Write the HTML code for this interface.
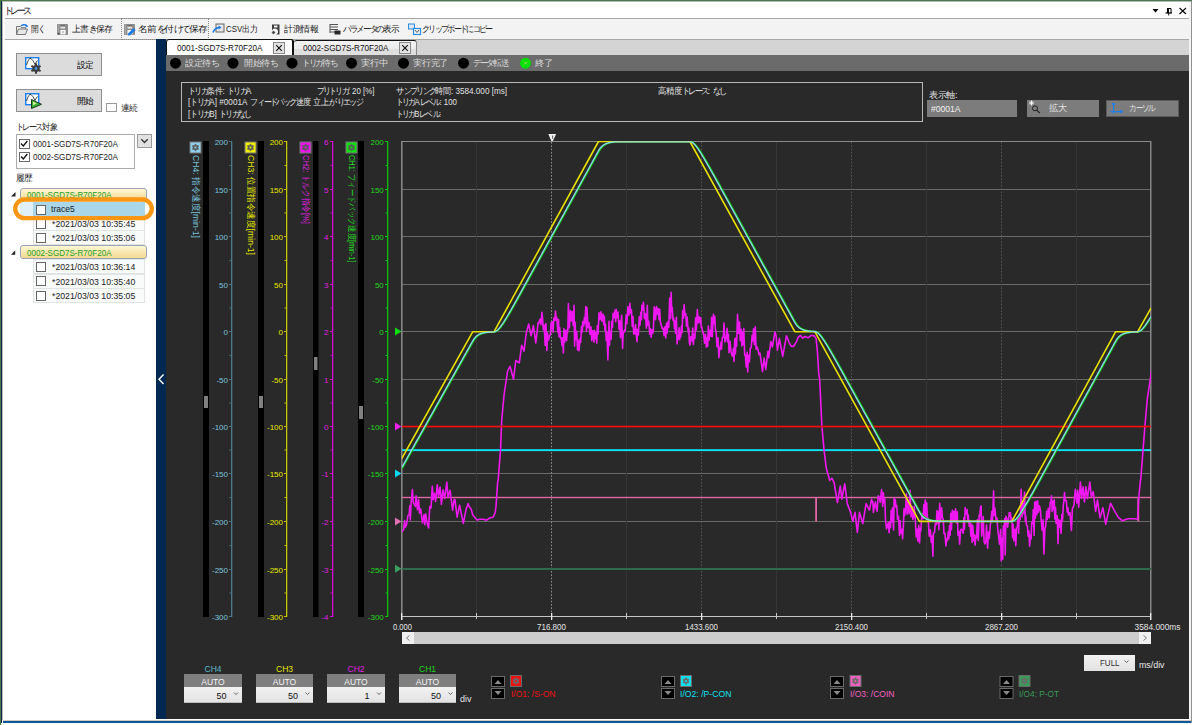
<!DOCTYPE html><html><head><meta charset="utf-8"><title>trace</title><style>
html,body{margin:0;padding:0;width:1192px;height:725px;overflow:hidden;background:#fff;}
body{position:relative;font-family:"Liberation Sans",sans-serif;font-size:9px;color:#000;}
.a{position:absolute;}
.t{position:absolute;white-space:nowrap;line-height:1;}
svg{position:absolute;left:0;top:0;}
.j{display:inline-block;text-align:center;overflow:visible;}
</style></head><body>
<div class="a" style="left:0px;top:0px;width:1192px;height:1px;background:#4a7a4a"></div>
<div class="a" style="left:0px;top:1px;width:1192px;height:1px;background:#b8b8b8"></div>
<div class="a" style="left:0px;top:0px;width:1px;height:725px;background:#4a7a4a"></div>
<div class="a" style="left:1px;top:1px;width:1px;height:722px;background:#0a2550"></div>
<div class="a" style="left:2px;top:2px;width:1px;height:718px;background:#c0bab4"></div>
<div class="a" style="left:1191px;top:1px;width:1px;height:722px;background:#909090"></div>
<div class="a" style="left:1189px;top:2px;width:2px;height:718px;background:#f4f4f4"></div>
<div class="a" style="left:3px;top:720px;width:1188px;height:1px;background:#d0c8c0"></div>
<div class="a" style="left:3px;top:721px;width:1188px;height:2px;background:#0a5aa0"></div>
<div class="t" style="left:4px;top:5.8px;font-size:9.5px;color:#111;transform:scaleX(0.893);transform-origin:0 0"><span class="j" style="width:7.0px">ト</span><span class="j" style="width:7.0px">レ</span><span class="j" style="width:7.0px">ー</span><span class="j" style="width:7.0px">ス</span></div>
<svg width="1192" height="725" style="pointer-events:none"><path d="M1152.5 9 L1158.5 9 L1155.5 12.5 Z" fill="#000"/><path d="M1167.5 8.5 h3.5 v4.5 M1167.5 8.5 v4.5" fill="none" stroke="#000" stroke-width="1"/><rect x="1167" y="8" width="2" height="5" fill="#000"/><path d="M1165.5 13 h6.5" stroke="#000" stroke-width="1.2"/><path d="M1168.7 13 v2.5" stroke="#000" stroke-width="0.9"/><path d="M1179.5 8 L1186 14 M1186 8 L1179.5 14" stroke="#000" stroke-width="1.1"/></svg>
<div class="a" style="left:5px;top:18px;width:1184px;height:1px;background:#a8a8a8"></div>
<div class="a" style="left:5px;top:19px;width:1184px;height:20px;background:#f3f3f3"></div>
<div class="a" style="left:5px;top:39px;width:1184px;height:1px;background:#a8a8a8"></div>
<div class="t" style="left:31px;top:24.5px;font-size:9px;color:#1a1a1a;transform:scaleX(0.865);transform-origin:0 0"><span class="j" style="width:8.6px">開</span><span class="j" style="width:7.0px">く</span></div>
<div class="t" style="left:72px;top:24.5px;font-size:9px;color:#1a1a1a;transform:scaleX(0.978);transform-origin:0 0"><span class="j" style="width:8.6px">上</span><span class="j" style="width:8.6px">書</span><span class="j" style="width:7.0px">き</span><span class="j" style="width:8.6px">保</span><span class="j" style="width:8.6px">存</span></div>
<div class="t" style="left:138px;top:24.5px;font-size:9px;color:#1a1a1a;transform:scaleX(1.086);transform-origin:0 0"><span class="j" style="width:8.6px">名</span><span class="j" style="width:8.6px">前</span><span class="j" style="width:7.0px">を</span><span class="j" style="width:8.6px">付</span><span class="j" style="width:7.0px">け</span><span class="j" style="width:7.0px">て</span><span class="j" style="width:8.6px">保</span><span class="j" style="width:8.6px">存</span></div>
<div class="t" style="left:225.5px;top:24.5px;font-size:9px;color:#1a1a1a;transform:scaleX(0.882);transform-origin:0 0">CSV<span class="j" style="width:8.6px">出</span><span class="j" style="width:8.6px">力</span></div>
<div class="t" style="left:284px;top:24.5px;font-size:9px;color:#1a1a1a;transform:scaleX(1.003);transform-origin:0 0"><span class="j" style="width:8.6px">計</span><span class="j" style="width:8.6px">測</span><span class="j" style="width:8.6px">情</span><span class="j" style="width:8.6px">報</span></div>
<div class="t" style="left:343px;top:24.5px;font-size:9px;color:#1a1a1a;transform:scaleX(0.954);transform-origin:0 0"><span class="j" style="width:7.0px">パ</span><span class="j" style="width:7.0px">ラ</span><span class="j" style="width:7.0px">メ</span><span class="j" style="width:7.0px">ー</span><span class="j" style="width:7.0px">タ</span><span class="j" style="width:7.0px">の</span><span class="j" style="width:8.6px">表</span><span class="j" style="width:8.6px">示</span></div>
<div class="t" style="left:422px;top:24.5px;font-size:9px;color:#1a1a1a;transform:scaleX(0.903);transform-origin:0 0"><span class="j" style="width:7.0px">ク</span><span class="j" style="width:7.0px">リ</span><span class="j" style="width:7.0px">ッ</span><span class="j" style="width:7.0px">プ</span><span class="j" style="width:7.0px">ボ</span><span class="j" style="width:7.0px">ー</span><span class="j" style="width:7.0px">ド</span><span class="j" style="width:7.0px">に</span><span class="j" style="width:7.0px">コ</span><span class="j" style="width:7.0px">ピ</span><span class="j" style="width:7.0px">ー</span></div>
<div class="a" style="left:121px;top:18px;width:88px;height:22px;border:1px dotted #8a8a8a;box-sizing:border-box"></div>
<svg width="1192" height="725"><path d="M16.5 26.5 h4 l1 1.2 h4 v2" fill="none" stroke="#777" stroke-width="1"/><path d="M16.5 26.5 v8 h9 l2-5.5 h-9 l-2 5.5" fill="#e8e8e8" stroke="#777" stroke-width="1"/><path d="M21 26 q3-2.5 6 0" fill="none" stroke="#1a7ae8" stroke-width="1.4"/><path d="M26 24.5 l2.5 1.8 -2.8 1.2z" fill="#1a7ae8"/><rect x="57" y="24" width="11" height="11" rx="0.8" fill="#8c8c8c"/><rect x="57.6" y="24.6" width="1.6" height="9.8" fill="#a6a6a6"/><rect x="60.5" y="25.3" width="4.6" height="3.3" fill="#e4e4e4"/><rect x="60.5" y="25.3" width="4.6" height="1.1" fill="#444"/><rect x="60.4" y="30" width="5.2" height="4.4" fill="#fafafa"/><rect x="62.5" y="31" width="1" height="2.2" fill="#999"/><circle cx="58.6" cy="33.6" r="0.8" fill="#333"/><rect x="124" y="24" width="11" height="11" rx="0.8" fill="#8c8c8c"/><rect x="124.6" y="24.6" width="1.6" height="9.8" fill="#a6a6a6"/><rect x="127.5" y="25.3" width="4.6" height="3.3" fill="#e4e4e4"/><rect x="127.5" y="25.3" width="4.6" height="1.1" fill="#444"/><rect x="127.4" y="30" width="5.2" height="4.4" fill="#fafafa"/><path d="M128.3 33.2 l5.3-5.3 2 2 -5.3 5.3 -2.4 0.4z" fill="#1a7ae8"/><rect x="216" y="24" width="8" height="8" fill="#e8e8e8" stroke="#666" stroke-width="1"/><path d="M213 32.5 q1.5-4.5 6-5" fill="none" stroke="#1a7ae8" stroke-width="1.6"/><path d="M218.5 25.5 l3 2 -3 2z" fill="#1a7ae8"/><path d="M272 24.5 h7.5 v10 h-4 a3 3 0 1 0 -3.5 -3z" fill="#3c3c3c"/><rect x="274" y="25.5" width="3.5" height="2" fill="#f0f0f0"/><circle cx="273.5" cy="32.5" r="1.8" fill="#3c3c3c" stroke="#f0f0f0" stroke-width="0.7"/><path d="M330 24.5 h8 M330 27 h8 M330 29.5 h8 M330 32 h5" stroke="#555" stroke-width="1"/><path d="M330 24 v9" stroke="#555" stroke-width="1"/><rect x="334.5" y="30.5" width="6" height="4" fill="#2a2a2a"/><rect x="408.5" y="24" width="6" height="5" fill="#dde8f4" stroke="#2a8ae0" stroke-width="1"/><rect x="413.5" y="28.5" width="7" height="6" fill="#f0f4f8" stroke="#2a8ae0" stroke-width="1.2"/><path d="M415 30 l2 2.5 2-2.5" fill="none" stroke="#333" stroke-width="0.8"/></svg>
<div class="a" style="left:16px;top:53px;width:86px;height:23px;background:#dcdcdc;border:1px solid #8f8f8f;box-sizing:border-box"></div>
<div class="a" style="left:16px;top:89px;width:86px;height:23px;background:#dcdcdc;border:1px solid #8f8f8f;box-sizing:border-box"></div>
<div class="t" style="left:77px;top:61px;font-size:9px;transform:scaleX(0.959);transform-origin:0 0"><span class="j" style="width:8.6px">設</span><span class="j" style="width:8.6px">定</span></div>
<div class="t" style="left:77px;top:97px;font-size:9px;transform:scaleX(0.959);transform-origin:0 0"><span class="j" style="width:8.6px">開</span><span class="j" style="width:8.6px">始</span></div>
<div class="a" style="left:106px;top:103px;width:11px;height:9px;background:#fff;border:1px solid #9a9a9a;box-sizing:border-box"></div>
<div class="t" style="left:121px;top:104px;font-size:9px;color:#222;transform:scaleX(0.959);transform-origin:0 0"><span class="j" style="width:8.6px">連</span><span class="j" style="width:8.6px">続</span></div>
<div class="t" style="left:16px;top:123px;font-size:9px;color:#222;transform:scaleX(0.918);transform-origin:0 0"><span class="j" style="width:7.0px">ト</span><span class="j" style="width:7.0px">レ</span><span class="j" style="width:7.0px">ー</span><span class="j" style="width:7.0px">ス</span><span class="j" style="width:8.6px">対</span><span class="j" style="width:8.6px">象</span></div>
<div class="a" style="left:16px;top:134px;width:119px;height:35px;background:#fff;border:1px solid #ababab;box-sizing:border-box"></div>
<div class="a" style="left:137px;top:134px;width:15px;height:14px;background:#e1e1e1;border:1px solid #9a9a9a;box-sizing:border-box"></div>
<div class="a" style="left:19px;top:139px;width:11px;height:10px;background:#fff;border:1px solid #6a6a6a;box-sizing:border-box"></div>
<div class="t" style="left:33px;top:139.7px;font-size:9px;color:#222;transform:scaleX(0.899);transform-origin:0 0">0001-SGD7S-R70F20A</div>
<div class="a" style="left:19px;top:152px;width:11px;height:10px;background:#fff;border:1px solid #6a6a6a;box-sizing:border-box"></div>
<div class="t" style="left:33px;top:152.7px;font-size:9px;color:#222;transform:scaleX(0.899);transform-origin:0 0">0002-SGD7S-R70F20A</div>
<div class="t" style="left:16px;top:174px;font-size:9px;color:#222;transform:scaleX(0.959);transform-origin:0 0"><span class="j" style="width:8.6px">履</span><span class="j" style="width:8.6px">歴</span></div>
<svg width="1192" height="725"><rect x="25.7" y="57.7" width="13" height="11" fill="#fff" stroke="#1a7ef0" stroke-width="1.4"/><path d="M26.5 65 q2.5-8 4.5-6.5 q2 1.5 4 6 q1.5-3 2.5-4" fill="none" stroke="#333" stroke-width="0.9"/><circle cx="36" cy="68.5" r="3.6" fill="#3c3c3c"/><path d="M36 63.2 v10.6 M31.4 65.8 l9.2 5.4 M31.4 71.2 l9.2 -5.4" stroke="#3c3c3c" stroke-width="2"/><circle cx="36" cy="68.5" r="1.4" fill="#4a90e0"/><rect x="25.7" y="93.7" width="13" height="11" fill="#fff" stroke="#1a7ef0" stroke-width="1.4"/><path d="M26.5 101 q2.5-8 4.5-6.5 q2 1.5 4 6 q1.5-3 2.5-4" fill="none" stroke="#333" stroke-width="0.9"/><path d="M31.5 99.5 l10 4.8 -10 4.2z" fill="#34b034" stroke="#1a3a1a" stroke-width="1"/><path d="M33 101.5 l4 2 -4 1.8z" fill="#d8f0a0"/><path d="M21 143.5 l2.3 2.5 4-5" fill="none" stroke="#111" stroke-width="1.3"/><path d="M21 156.5 l2.3 2.5 4-5" fill="none" stroke="#111" stroke-width="1.3"/><path d="M141.3 139.3 l3.2 3.2 3.2-3.2" fill="none" stroke="#333" stroke-width="1.4"/></svg>
<div class="a" style="left:33px;top:216px;width:112px;height:15px;background:#f9fafa;border:1px solid #e0e4e4;box-sizing:border-box"></div>
<div class="a" style="left:36px;top:218.5px;width:10px;height:10px;background:#fff;border:1px solid #666;box-sizing:border-box"></div>
<div class="t" style="left:51.5px;top:220px;font-size:9px;color:#222;transform:scaleX(0.967);transform-origin:0 0">*2021/03/03&#160;10:35:45</div>
<div class="a" style="left:33px;top:230px;width:112px;height:15px;background:#f9fafa;border:1px solid #e0e4e4;box-sizing:border-box"></div>
<div class="a" style="left:36px;top:232.5px;width:10px;height:10px;background:#fff;border:1px solid #666;box-sizing:border-box"></div>
<div class="t" style="left:51.5px;top:234px;font-size:9px;color:#222;transform:scaleX(0.967);transform-origin:0 0">*2021/03/03&#160;10:35:06</div>
<div class="a" style="left:33px;top:259px;width:112px;height:15px;background:#f9fafa;border:1px solid #e0e4e4;box-sizing:border-box"></div>
<div class="a" style="left:36px;top:261.5px;width:10px;height:10px;background:#fff;border:1px solid #666;box-sizing:border-box"></div>
<div class="t" style="left:51.5px;top:263px;font-size:9px;color:#222;transform:scaleX(0.967);transform-origin:0 0">*2021/03/03&#160;10:36:14</div>
<div class="a" style="left:33px;top:273.5px;width:112px;height:15px;background:#f9fafa;border:1px solid #e0e4e4;box-sizing:border-box"></div>
<div class="a" style="left:36px;top:276.0px;width:10px;height:10px;background:#fff;border:1px solid #666;box-sizing:border-box"></div>
<div class="t" style="left:51.5px;top:277.5px;font-size:9px;color:#222;transform:scaleX(0.967);transform-origin:0 0">*2021/03/03&#160;10:35:40</div>
<div class="a" style="left:33px;top:288px;width:112px;height:15px;background:#f9fafa;border:1px solid #e0e4e4;box-sizing:border-box"></div>
<div class="a" style="left:36px;top:290.5px;width:10px;height:10px;background:#fff;border:1px solid #666;box-sizing:border-box"></div>
<div class="t" style="left:51.5px;top:292px;font-size:9px;color:#222;transform:scaleX(0.967);transform-origin:0 0">*2021/03/03&#160;10:35:05</div>
<div class="a" style="left:19.5px;top:187.5px;width:127px;height:13px;background:linear-gradient(#fff8d4,#f4d890);border:1px solid #9aa4b8;border-radius:3px;box-sizing:border-box"></div>
<div class="t" style="left:26.5px;top:190.5px;font-size:9px;color:#22a022;transform:scaleX(0.894);transform-origin:0 0">0001-SGD7S-R70F20A</div>
<div class="a" style="left:20px;top:202px;width:13px;height:14px;background:#dff0f8"></div>
<div class="a" style="left:33px;top:202px;width:112px;height:14px;background:#a9d6e8"></div>
<div class="a" style="left:36px;top:204.5px;width:10px;height:10px;background:#fff;border:1px solid #666;box-sizing:border-box"></div>
<div class="t" style="left:50.5px;top:205px;font-size:9px;color:#222;transform:scaleX(0.951);transform-origin:0 0">trace5</div>
<div class="a" style="left:19.5px;top:245.3px;width:127px;height:13.7px;background:linear-gradient(#fff8d4,#f4d890);border:1px solid #9aa4b8;border-radius:3px;box-sizing:border-box"></div>
<div class="t" style="left:26.5px;top:248.65px;font-size:9px;color:#22a022;transform:scaleX(0.894);transform-origin:0 0">0002-SGD7S-R70F20A</div>
<svg width="1192" height="725"><path d="M11 196.5 h4.5 v-4.5z" fill="#222"/><path d="M11 254.8 h4.2 v-4.5z" fill="#222"/><rect x="15.2" y="199.5" width="136.6" height="18.6" rx="9.3" fill="none" stroke="#fb9612" stroke-width="4.3"/></svg>
<div class="a" style="left:156px;top:39px;width:10px;height:680px;background:#002850"></div>
<svg width="1192" height="725"><path d="M163.5 374.5 l-4.5 4.8 4.5 4.8" fill="none" stroke="#fff" stroke-width="1.4"/></svg>
<div class="a" style="left:166px;top:39px;width:1023px;height:17px;background:#d4d4d4"></div>
<div class="a" style="left:166px;top:39px;width:1023px;height:1px;background:#a8a8a8"></div>
<div class="a" style="left:166px;top:39px;width:128px;height:17px;background:#fff;border-top:1px solid #111;border-left:1px solid #111;border-right:2px solid #111;border-radius:3px 3px 0 0;box-sizing:border-box"></div>
<div class="a" style="left:294px;top:40px;width:123px;height:16px;background:linear-gradient(#f2f2f2 0,#ececec 50%,#dedede 51%,#e0e0e0);border-top:1px solid #111;border-right:1px solid #888;border-radius:3px 3px 0 0;box-sizing:border-box"></div>
<div class="t" style="left:176.8px;top:44.3px;font-size:9px;color:#111;transform:scaleX(0.904);transform-origin:0 0">0001-SGD7S-R70F20A</div>
<div class="t" style="left:303px;top:44.3px;font-size:9px;color:#111;transform:scaleX(0.904);transform-origin:0 0">0002-SGD7S-R70F20A</div>
<div class="a" style="left:273px;top:42px;width:12px;height:12px;background:#e4e4e4;border:1px solid #8a8a8a;box-sizing:border-box"></div>
<svg width="1192" height="725"><path d="M276.2 45.2 l5.6 5.6 M281.8 45.2 l-5.6 5.6" stroke="#111" stroke-width="1.15"/></svg>
<div class="a" style="left:399px;top:42px;width:12px;height:12px;background:#e4e4e4;border:1px solid #8a8a8a;box-sizing:border-box"></div>
<svg width="1192" height="725"><path d="M402.2 45.2 l5.6 5.6 M407.8 45.2 l-5.6 5.6" stroke="#111" stroke-width="1.15"/></svg>
<div class="a" style="left:166px;top:55px;width:1023px;height:16px;background:#6b6b6b"></div>
<svg width="1192" height="725"><circle cx="175.5" cy="63.2" r="5.5" fill="#000"/><circle cx="233.0" cy="63.2" r="5.5" fill="#000"/><circle cx="292.0" cy="63.2" r="5.5" fill="#000"/><circle cx="351.5" cy="63.2" r="5.5" fill="#000"/><circle cx="403.5" cy="63.2" r="5.5" fill="#000"/><circle cx="463.5" cy="63.2" r="5.5" fill="#000"/><circle cx="525.5" cy="63.2" r="5.5" fill="#00e000"/><path d="M524 61.5 l3 3 M527 61.5 l-3 3" stroke="#c8d060" stroke-width="0.8"/></svg>
<div class="t" style="left:185px;top:59px;font-size:9px;color:#dcdcdc;transform:scaleX(0.991);transform-origin:0 0"><span class="j" style="width:8.6px">設</span><span class="j" style="width:8.6px">定</span><span class="j" style="width:8.6px">待</span><span class="j" style="width:7.0px">ち</span></div>
<div class="t" style="left:244px;top:59px;font-size:9px;color:#dcdcdc;transform:scaleX(0.991);transform-origin:0 0"><span class="j" style="width:8.6px">開</span><span class="j" style="width:8.6px">始</span><span class="j" style="width:8.6px">待</span><span class="j" style="width:7.0px">ち</span></div>
<div class="t" style="left:301.5px;top:59px;font-size:9px;color:#dcdcdc;transform:scaleX(0.956);transform-origin:0 0"><span class="j" style="width:7.0px">ト</span><span class="j" style="width:7.0px">リ</span><span class="j" style="width:7.0px">ガ</span><span class="j" style="width:8.6px">待</span><span class="j" style="width:7.0px">ち</span></div>
<div class="t" style="left:360.5px;top:59px;font-size:9px;color:#dcdcdc;transform:scaleX(1.047);transform-origin:0 0"><span class="j" style="width:8.6px">実</span><span class="j" style="width:8.6px">行</span><span class="j" style="width:8.6px">中</span></div>
<div class="t" style="left:413px;top:59px;font-size:9px;color:#dcdcdc;transform:scaleX(1.021);transform-origin:0 0"><span class="j" style="width:8.6px">実</span><span class="j" style="width:8.6px">行</span><span class="j" style="width:8.6px">完</span><span class="j" style="width:7.0px">了</span></div>
<div class="t" style="left:473px;top:59px;font-size:9px;color:#dcdcdc;transform:scaleX(0.942);transform-origin:0 0"><span class="j" style="width:7.0px">デ</span><span class="j" style="width:7.0px">ー</span><span class="j" style="width:7.0px">タ</span><span class="j" style="width:8.6px">転</span><span class="j" style="width:8.6px">送</span></div>
<div class="t" style="left:535px;top:59px;font-size:9px;color:#dcdcdc;transform:scaleX(1.026);transform-origin:0 0"><span class="j" style="width:8.6px">終</span><span class="j" style="width:7.0px">了</span></div>
<div class="a" style="left:166px;top:71px;width:1023px;height:648px;background:#292929"></div>
<div class="a" style="left:181px;top:82px;width:742px;height:40px;border:1px solid #b8b8b8;box-sizing:border-box"></div>
<div class="t" style="left:187.5px;top:86.5px;font-size:9px;color:#e2e2e2;transform:scaleX(0.905);transform-origin:0 0"><span class="j" style="width:7.0px">ト</span><span class="j" style="width:7.0px">リ</span><span class="j" style="width:7.0px">ガ</span><span class="j" style="width:8.6px">条</span><span class="j" style="width:8.6px">件</span>:&#160;<span class="j" style="width:7.0px">ト</span><span class="j" style="width:7.0px">リ</span><span class="j" style="width:7.0px">ガ</span>A</div>
<div class="t" style="left:187.5px;top:98px;font-size:9px;color:#e2e2e2;transform:scaleX(0.906);transform-origin:0 0">[<span class="j" style="width:7.0px">ト</span><span class="j" style="width:7.0px">リ</span><span class="j" style="width:7.0px">ガ</span>A]&#160;#0001A&#160;<span class="j" style="width:8.6px">フ</span><span class="j" style="width:7.0px">ィ</span><span class="j" style="width:7.0px">ー</span><span class="j" style="width:7.0px">ド</span><span class="j" style="width:7.0px">バ</span><span class="j" style="width:7.0px">ッ</span><span class="j" style="width:7.0px">ク</span><span class="j" style="width:8.6px">速</span><span class="j" style="width:8.6px">度</span>&#160;<span class="j" style="width:8.6px">立</span><span class="j" style="width:8.6px">上</span><span class="j" style="width:8.6px">が</span><span class="j" style="width:7.0px">り</span><span class="j" style="width:7.0px">エ</span><span class="j" style="width:7.0px">ッ</span><span class="j" style="width:7.0px">ジ</span></div>
<div class="t" style="left:187.5px;top:109.5px;font-size:9px;color:#e2e2e2;transform:scaleX(0.899);transform-origin:0 0">[<span class="j" style="width:7.0px">ト</span><span class="j" style="width:7.0px">リ</span><span class="j" style="width:7.0px">ガ</span>B]&#160;<span class="j" style="width:7.0px">ト</span><span class="j" style="width:7.0px">リ</span><span class="j" style="width:7.0px">ガ</span><span class="j" style="width:7.0px">な</span><span class="j" style="width:7.0px">し</span></div>
<div class="t" style="left:317px;top:86.5px;font-size:9px;color:#e2e2e2;transform:scaleX(0.878);transform-origin:0 0"><span class="j" style="width:7.0px">プ</span><span class="j" style="width:7.0px">リ</span><span class="j" style="width:7.0px">ト</span><span class="j" style="width:7.0px">リ</span><span class="j" style="width:7.0px">ガ</span>:&#160;20&#160;[%]</div>
<div class="t" style="left:396px;top:86.5px;font-size:9px;color:#e2e2e2;transform:scaleX(0.904);transform-origin:0 0"><span class="j" style="width:8.6px">サ</span><span class="j" style="width:7.0px">ン</span><span class="j" style="width:7.0px">プ</span><span class="j" style="width:7.0px">リ</span><span class="j" style="width:7.0px">ン</span><span class="j" style="width:7.0px">グ</span><span class="j" style="width:8.6px">時</span><span class="j" style="width:8.6px">間</span>:&#160;3584.000&#160;[ms]</div>
<div class="t" style="left:396px;top:98px;font-size:9px;color:#e2e2e2;transform:scaleX(0.876);transform-origin:0 0"><span class="j" style="width:7.0px">ト</span><span class="j" style="width:7.0px">リ</span><span class="j" style="width:7.0px">ガ</span>A<span class="j" style="width:7.0px">レ</span><span class="j" style="width:8.6px">ベ</span><span class="j" style="width:7.0px">ル</span>:&#160;100</div>
<div class="t" style="left:396px;top:109.5px;font-size:9px;color:#e2e2e2;transform:scaleX(0.864);transform-origin:0 0"><span class="j" style="width:7.0px">ト</span><span class="j" style="width:7.0px">リ</span><span class="j" style="width:7.0px">ガ</span>B<span class="j" style="width:7.0px">レ</span><span class="j" style="width:8.6px">ベ</span><span class="j" style="width:7.0px">ル</span>:</div>
<div class="t" style="left:658px;top:86.5px;font-size:9px;color:#e2e2e2;transform:scaleX(0.927);transform-origin:0 0"><span class="j" style="width:8.6px">高</span><span class="j" style="width:8.6px">精</span><span class="j" style="width:8.6px">度</span><span class="j" style="width:7.0px">ト</span><span class="j" style="width:7.0px">レ</span><span class="j" style="width:7.0px">ー</span><span class="j" style="width:7.0px">ス</span>:&#160;<span class="j" style="width:7.0px">な</span><span class="j" style="width:7.0px">し</span></div>
<div class="t" style="left:928.5px;top:90.5px;font-size:9px;color:#e2e2e2;transform:scaleX(1.007);transform-origin:0 0"><span class="j" style="width:8.6px">表</span><span class="j" style="width:8.6px">示</span><span class="j" style="width:8.6px">軸</span>:</div>
<div class="a" style="left:927px;top:100px;width:90px;height:17px;background:#7c7c7c"></div>
<div class="t" style="left:931px;top:104.5px;font-size:9px;color:#f0f0f0;transform:scaleX(0.951);transform-origin:0 0">#0001A</div>
<div class="a" style="left:1027px;top:100px;width:72px;height:17px;background:#7c7c7c"></div>
<div class="t" style="left:1049px;top:104px;font-size:9px;color:#e2e2e2;transform:scaleX(1.017);transform-origin:0 0"><span class="j" style="width:8.6px">拡</span><span class="j" style="width:8.6px">大</span></div>
<div class="a" style="left:1106px;top:100px;width:73px;height:17px;background:#7c7c7c;border:1px solid #5a5a5a;box-sizing:border-box"></div>
<div class="t" style="left:1129px;top:104px;font-size:9px;color:#e2e2e2;transform:scaleX(0.861);transform-origin:0 0"><span class="j" style="width:8.6px">カ</span><span class="j" style="width:7.0px">ー</span><span class="j" style="width:7.0px">ソ</span><span class="j" style="width:7.0px">ル</span></div>
<svg width="1192" height="725"><circle cx="1035" cy="108.3" r="2.5" fill="none" stroke="#222" stroke-width="1"/><path d="M1036.8 110.1 l3 3" stroke="#222" stroke-width="1.2"/><path d="M1031.5 100.5 v5 M1029 103 h5 M1030 101.5 l3 3 M1033 101.5 l-3 3" stroke="#fff" stroke-width="0.9"/><path d="M1113.6 104 v9.5 M1110.5 111.6 h10" fill="none" stroke="#1a7ef0" stroke-width="1.2"/><rect x="1112.2" y="103" width="2.8" height="2" fill="#1a7ef0"/><circle cx="1121" cy="111.6" r="1.5" fill="#1a7ef0"/></svg>
<svg width="1192" height="725" font-family="Liberation Sans, sans-serif"><rect x="203" y="141" width="6" height="476" fill="#000"/><rect x="204" y="396" width="4" height="12" fill="#808080"/><rect x="231" y="141" width="1.3" height="476" fill="#4d7888"/><rect x="229" y="141" width="2.5" height="1" fill="#4d7888"/><rect x="229.5" y="165.0" width="2" height="1" fill="#4d7888"/><text x="228" y="144.5" font-size="8px" fill="#7cc4dc" text-anchor="end">200</text><rect x="229" y="189" width="2.5" height="1" fill="#4d7888"/><rect x="229.5" y="212.5" width="2" height="1" fill="#4d7888"/><text x="228" y="192.5" font-size="8px" fill="#7cc4dc" text-anchor="end">150</text><rect x="229" y="236" width="2.5" height="1" fill="#4d7888"/><rect x="229.5" y="260.0" width="2" height="1" fill="#4d7888"/><text x="228" y="239.5" font-size="8px" fill="#7cc4dc" text-anchor="end">100</text><rect x="229" y="284" width="2.5" height="1" fill="#4d7888"/><rect x="229.5" y="307.5" width="2" height="1" fill="#4d7888"/><text x="228" y="287.5" font-size="8px" fill="#7cc4dc" text-anchor="end">50</text><rect x="229" y="331" width="2.5" height="1" fill="#4d7888"/><rect x="229.5" y="355.0" width="2" height="1" fill="#4d7888"/><text x="228" y="334.5" font-size="8px" fill="#7cc4dc" text-anchor="end">0</text><rect x="229" y="379" width="2.5" height="1" fill="#4d7888"/><rect x="229.5" y="402.5" width="2" height="1" fill="#4d7888"/><text x="228" y="382.5" font-size="8px" fill="#7cc4dc" text-anchor="end">-50</text><rect x="229" y="426" width="2.5" height="1" fill="#4d7888"/><rect x="229.5" y="449.5" width="2" height="1" fill="#4d7888"/><text x="228" y="429.5" font-size="8px" fill="#7cc4dc" text-anchor="end">-100</text><rect x="229" y="473" width="2.5" height="1" fill="#4d7888"/><rect x="229.5" y="497.0" width="2" height="1" fill="#4d7888"/><text x="228" y="476.5" font-size="8px" fill="#7cc4dc" text-anchor="end">-150</text><rect x="229" y="521" width="2.5" height="1" fill="#4d7888"/><rect x="229.5" y="545.0" width="2" height="1" fill="#4d7888"/><text x="228" y="524.5" font-size="8px" fill="#7cc4dc" text-anchor="end">-200</text><rect x="229" y="569" width="2.5" height="1" fill="#4d7888"/><rect x="229.5" y="592.5" width="2" height="1" fill="#4d7888"/><text x="228" y="572.5" font-size="8px" fill="#7cc4dc" text-anchor="end">-250</text><rect x="229" y="616" width="2.5" height="1" fill="#4d7888"/><text x="228" y="619.5" font-size="8px" fill="#7cc4dc" text-anchor="end">-300</text><rect x="190" y="142" width="11" height="11" fill="#8fd0ee" stroke="#777" stroke-width="1"/><path d="M195.50 143.90 L196.70 145.42 L198.62 145.70 L197.90 147.50 L198.62 149.30 L196.70 149.58 L195.50 151.10 L194.30 149.58 L192.38 149.30 L193.10 147.50 L192.38 145.70 L194.30 145.42Z" fill="#5a5a5a" stroke="#5a5a5a" stroke-width="0.6" stroke-linejoin="round"/><circle cx="195.5" cy="147.5" r="1.08" fill="#8fd0ee"/><text transform="translate(192.5,155) rotate(90)" font-size="9px" fill="#7cc4dc" textLength="83" lengthAdjust="spacingAndGlyphs">CH4: 指令速度[min-1]</text><rect x="258" y="141" width="6" height="476" fill="#000"/><rect x="259" y="396" width="4" height="12" fill="#808080"/><rect x="286" y="141" width="1.3" height="476" fill="#c4c400"/><rect x="284" y="141" width="2.5" height="1" fill="#c4c400"/><rect x="284.5" y="165.0" width="2" height="1" fill="#c4c400"/><text x="283" y="144.5" font-size="8px" fill="#e8e800" text-anchor="end">200</text><rect x="284" y="189" width="2.5" height="1" fill="#c4c400"/><rect x="284.5" y="212.5" width="2" height="1" fill="#c4c400"/><text x="283" y="192.5" font-size="8px" fill="#e8e800" text-anchor="end">150</text><rect x="284" y="236" width="2.5" height="1" fill="#c4c400"/><rect x="284.5" y="260.0" width="2" height="1" fill="#c4c400"/><text x="283" y="239.5" font-size="8px" fill="#e8e800" text-anchor="end">100</text><rect x="284" y="284" width="2.5" height="1" fill="#c4c400"/><rect x="284.5" y="307.5" width="2" height="1" fill="#c4c400"/><text x="283" y="287.5" font-size="8px" fill="#e8e800" text-anchor="end">50</text><rect x="284" y="331" width="2.5" height="1" fill="#c4c400"/><rect x="284.5" y="355.0" width="2" height="1" fill="#c4c400"/><text x="283" y="334.5" font-size="8px" fill="#e8e800" text-anchor="end">0</text><rect x="284" y="379" width="2.5" height="1" fill="#c4c400"/><rect x="284.5" y="402.5" width="2" height="1" fill="#c4c400"/><text x="283" y="382.5" font-size="8px" fill="#e8e800" text-anchor="end">-50</text><rect x="284" y="426" width="2.5" height="1" fill="#c4c400"/><rect x="284.5" y="449.5" width="2" height="1" fill="#c4c400"/><text x="283" y="429.5" font-size="8px" fill="#e8e800" text-anchor="end">-100</text><rect x="284" y="473" width="2.5" height="1" fill="#c4c400"/><rect x="284.5" y="497.0" width="2" height="1" fill="#c4c400"/><text x="283" y="476.5" font-size="8px" fill="#e8e800" text-anchor="end">-150</text><rect x="284" y="521" width="2.5" height="1" fill="#c4c400"/><rect x="284.5" y="545.0" width="2" height="1" fill="#c4c400"/><text x="283" y="524.5" font-size="8px" fill="#e8e800" text-anchor="end">-200</text><rect x="284" y="569" width="2.5" height="1" fill="#c4c400"/><rect x="284.5" y="592.5" width="2" height="1" fill="#c4c400"/><text x="283" y="572.5" font-size="8px" fill="#e8e800" text-anchor="end">-250</text><rect x="284" y="616" width="2.5" height="1" fill="#c4c400"/><text x="283" y="619.5" font-size="8px" fill="#e8e800" text-anchor="end">-300</text><rect x="245" y="142" width="11" height="11" fill="#f0f000" stroke="#777" stroke-width="1"/><path d="M250.50 143.90 L251.70 145.42 L253.62 145.70 L252.90 147.50 L253.62 149.30 L251.70 149.58 L250.50 151.10 L249.30 149.58 L247.38 149.30 L248.10 147.50 L247.38 145.70 L249.30 145.42Z" fill="#5a5a5a" stroke="#5a5a5a" stroke-width="0.6" stroke-linejoin="round"/><circle cx="250.5" cy="147.5" r="1.08" fill="#f0f000"/><text transform="translate(247.5,155) rotate(90)" font-size="9px" fill="#e8e800" textLength="100" lengthAdjust="spacingAndGlyphs">CH3: 位置指令速度[min-1]</text><rect x="313" y="141" width="5.5" height="476" fill="#000"/><rect x="314" y="357" width="3.5" height="13" fill="#808080"/><rect x="332" y="141" width="1.3" height="476" fill="#d010d0"/><rect x="330" y="141" width="2.5" height="1" fill="#d010d0"/><rect x="330.5" y="165.0" width="2" height="1" fill="#d010d0"/><text x="328.5" y="144.5" font-size="8px" fill="#e020e0" text-anchor="end">6</text><rect x="330" y="189" width="2.5" height="1" fill="#d010d0"/><rect x="330.5" y="212.5" width="2" height="1" fill="#d010d0"/><text x="328.5" y="192.5" font-size="8px" fill="#e020e0" text-anchor="end">5</text><rect x="330" y="236" width="2.5" height="1" fill="#d010d0"/><rect x="330.5" y="260.0" width="2" height="1" fill="#d010d0"/><text x="328.5" y="239.5" font-size="8px" fill="#e020e0" text-anchor="end">4</text><rect x="330" y="284" width="2.5" height="1" fill="#d010d0"/><rect x="330.5" y="307.5" width="2" height="1" fill="#d010d0"/><text x="328.5" y="287.5" font-size="8px" fill="#e020e0" text-anchor="end">3</text><rect x="330" y="331" width="2.5" height="1" fill="#d010d0"/><rect x="330.5" y="355.0" width="2" height="1" fill="#d010d0"/><text x="328.5" y="334.5" font-size="8px" fill="#e020e0" text-anchor="end">2</text><rect x="330" y="379" width="2.5" height="1" fill="#d010d0"/><rect x="330.5" y="402.5" width="2" height="1" fill="#d010d0"/><text x="328.5" y="382.5" font-size="8px" fill="#e020e0" text-anchor="end">1</text><rect x="330" y="426" width="2.5" height="1" fill="#d010d0"/><rect x="330.5" y="449.5" width="2" height="1" fill="#d010d0"/><text x="328.5" y="429.5" font-size="8px" fill="#e020e0" text-anchor="end">0</text><rect x="330" y="473" width="2.5" height="1" fill="#d010d0"/><rect x="330.5" y="497.0" width="2" height="1" fill="#d010d0"/><text x="328.5" y="476.5" font-size="8px" fill="#e020e0" text-anchor="end">-1</text><rect x="330" y="521" width="2.5" height="1" fill="#d010d0"/><rect x="330.5" y="545.0" width="2" height="1" fill="#d010d0"/><text x="328.5" y="524.5" font-size="8px" fill="#e020e0" text-anchor="end">-2</text><rect x="330" y="569" width="2.5" height="1" fill="#d010d0"/><rect x="330.5" y="592.5" width="2" height="1" fill="#d010d0"/><text x="328.5" y="572.5" font-size="8px" fill="#e020e0" text-anchor="end">-3</text><rect x="330" y="616" width="2.5" height="1" fill="#d010d0"/><text x="328.5" y="619.5" font-size="8px" fill="#e020e0" text-anchor="end">-4</text><rect x="300" y="142" width="11" height="11" fill="#f010f0" stroke="#777" stroke-width="1"/><path d="M305.50 143.90 L306.70 145.42 L308.62 145.70 L307.90 147.50 L308.62 149.30 L306.70 149.58 L305.50 151.10 L304.30 149.58 L302.38 149.30 L303.10 147.50 L302.38 145.70 L304.30 145.42Z" fill="#5a5a5a" stroke="#5a5a5a" stroke-width="0.6" stroke-linejoin="round"/><circle cx="305.5" cy="147.5" r="1.08" fill="#f010f0"/><text transform="translate(302.5,155) rotate(90)" font-size="9px" fill="#e020e0" textLength="69" lengthAdjust="spacingAndGlyphs">CH2: トルク指令[%]</text><rect x="358" y="141" width="6" height="476" fill="#000"/><rect x="359" y="406" width="4" height="13" fill="#808080"/><rect x="387" y="141" width="1.3" height="476" fill="#10c010"/><rect x="385" y="141" width="2.5" height="1" fill="#10c010"/><rect x="385.5" y="165.0" width="2" height="1" fill="#10c010"/><text x="383.8" y="144.5" font-size="8px" fill="#20d820" text-anchor="end">200</text><rect x="385" y="189" width="2.5" height="1" fill="#10c010"/><rect x="385.5" y="212.5" width="2" height="1" fill="#10c010"/><text x="383.8" y="192.5" font-size="8px" fill="#20d820" text-anchor="end">150</text><rect x="385" y="236" width="2.5" height="1" fill="#10c010"/><rect x="385.5" y="260.0" width="2" height="1" fill="#10c010"/><text x="383.8" y="239.5" font-size="8px" fill="#20d820" text-anchor="end">100</text><rect x="385" y="284" width="2.5" height="1" fill="#10c010"/><rect x="385.5" y="307.5" width="2" height="1" fill="#10c010"/><text x="383.8" y="287.5" font-size="8px" fill="#20d820" text-anchor="end">50</text><rect x="385" y="331" width="2.5" height="1" fill="#10c010"/><rect x="385.5" y="355.0" width="2" height="1" fill="#10c010"/><text x="383.8" y="334.5" font-size="8px" fill="#20d820" text-anchor="end">0</text><rect x="385" y="379" width="2.5" height="1" fill="#10c010"/><rect x="385.5" y="402.5" width="2" height="1" fill="#10c010"/><text x="383.8" y="382.5" font-size="8px" fill="#20d820" text-anchor="end">-50</text><rect x="385" y="426" width="2.5" height="1" fill="#10c010"/><rect x="385.5" y="449.5" width="2" height="1" fill="#10c010"/><text x="383.8" y="429.5" font-size="8px" fill="#20d820" text-anchor="end">-100</text><rect x="385" y="473" width="2.5" height="1" fill="#10c010"/><rect x="385.5" y="497.0" width="2" height="1" fill="#10c010"/><text x="383.8" y="476.5" font-size="8px" fill="#20d820" text-anchor="end">-150</text><rect x="385" y="521" width="2.5" height="1" fill="#10c010"/><rect x="385.5" y="545.0" width="2" height="1" fill="#10c010"/><text x="383.8" y="524.5" font-size="8px" fill="#20d820" text-anchor="end">-200</text><rect x="385" y="569" width="2.5" height="1" fill="#10c010"/><rect x="385.5" y="592.5" width="2" height="1" fill="#10c010"/><text x="383.8" y="572.5" font-size="8px" fill="#20d820" text-anchor="end">-250</text><rect x="385" y="616" width="2.5" height="1" fill="#10c010"/><text x="383.8" y="619.5" font-size="8px" fill="#20d820" text-anchor="end">-300</text><rect x="346" y="142" width="11" height="11" fill="#10e010" stroke="#777" stroke-width="1"/><path d="M351.50 143.90 L352.70 145.42 L354.62 145.70 L353.90 147.50 L354.62 149.30 L352.70 149.58 L351.50 151.10 L350.30 149.58 L348.38 149.30 L349.10 147.50 L348.38 145.70 L350.30 145.42Z" fill="#5a5a5a" stroke="#5a5a5a" stroke-width="0.6" stroke-linejoin="round"/><circle cx="351.5" cy="147.5" r="1.08" fill="#10e010"/><text transform="translate(348.5,155) rotate(90)" font-size="9px" fill="#20d820" textLength="107.5" lengthAdjust="spacingAndGlyphs">CH1: フィードバック速度[min-1]</text></svg>
<svg width="1192" height="725"><rect x="402" y="189" width="749" height="1" fill="#6a6a6a"/><rect x="402" y="236" width="749" height="1" fill="#6a6a6a"/><rect x="402" y="284" width="749" height="1" fill="#6a6a6a"/><rect x="402" y="331" width="749" height="1" fill="#6a6a6a"/><rect x="402" y="379" width="749" height="1" fill="#6a6a6a"/><rect x="402" y="426" width="749" height="1" fill="#6a6a6a"/><rect x="402" y="473" width="749" height="1" fill="#6a6a6a"/><rect x="402" y="521" width="749" height="1" fill="#6a6a6a"/><rect x="402" y="569" width="749" height="1" fill="#6a6a6a"/><rect x="476" y="142" width="1" height="474" fill="#363636"/><line x1="551.5" y1="142" x2="551.5" y2="616" stroke="#8c8c8c" stroke-width="1" stroke-dasharray="1.7 1.6"/><rect x="626" y="142" width="1" height="474" fill="#363636"/><line x1="701.5" y1="142" x2="701.5" y2="616" stroke="#545454" stroke-width="1" stroke-dasharray="1.7 1.6"/><rect x="776" y="142" width="1" height="474" fill="#363636"/><line x1="851.5" y1="142" x2="851.5" y2="616" stroke="#545454" stroke-width="1" stroke-dasharray="1.7 1.6"/><rect x="926" y="142" width="1" height="474" fill="#363636"/><line x1="1001.5" y1="142" x2="1001.5" y2="616" stroke="#545454" stroke-width="1" stroke-dasharray="1.7 1.6"/><rect x="1076" y="142" width="1" height="474" fill="#363636"/><rect x="401" y="141" width="750" height="1" fill="#8a8a8a"/><rect x="401" y="616" width="750" height="1" fill="#8a8a8a"/><rect x="401" y="141" width="1.6" height="479" fill="#868686"/><rect x="1150" y="141" width="1.5" height="479" fill="#868686"/><path d="M548.3 134 h7.8 l-3.2 7 h-1.6z" fill="#f0f0f0"/><path d="M552.6 135.5 v3.3" stroke="#3a3a3a" stroke-width="0.8"/></svg>
<svg width="1192" height="725"><defs><clipPath id="pc"><rect x="402" y="141" width="749" height="476"/></clipPath></defs><rect x="402" y="568" width="749" height="2" fill="#2f6a4c"/><rect x="402" y="496.8" width="749" height="1.4" fill="#e066a6"/><rect x="815.2" y="497" width="1.8" height="24.5" fill="#e066a6"/><rect x="1137.4" y="497" width="1.8" height="24.5" fill="#e066a6"/><rect x="402" y="449.2" width="749" height="1.9" fill="#10e4f4"/><g clip-path="url(#pc)"><path d="M401.7 532.1 L403.7 529.6 L404.6 520.5 L405.4 527.2 L406.6 524.7 L407.9 515.6 L409.1 514.7 L409.9 505.6 L410.3 520.1 L411.2 501.5 L412.4 489.5 L413.2 502.3 L415.3 506.5 L416.1 495.7 L417.4 509.8 L418.6 499.8 L419.5 513.1 L420.7 508.9 L422.4 523.0 L424.0 514.7 L424.8 524.7 L425.7 513.9 L427.3 523.8 L428.6 528.0 L429.8 506.5 L431.0 508.1 L432.3 486.2 L433.1 499.8 L434.4 493.2 L435.6 501.5 L437.3 484.9 L438.5 496.5 L440.1 487.0 L441.4 504.4 L443.0 489.9 L444.7 498.6 L446.8 482.0 L448.0 497.4 L450.1 490.3 L452.6 510.2 L454.2 499.4 L455.0 499.8 L457.1 517.2 L459.6 505.2 L463.3 523.4 L466.2 508.9 L468.2 503.5 L469.1 506.4 L471.1 508.9 L472.8 515.1 L474.9 517.6 L476.9 520.1 L479.8 519.3 L483.1 519.3 L486.5 520.1 L489.8 518.0 L493.1 517.2 L495.1 513.0 L496.0 506.4 L496.8 494.8 L497.6 482.4 L498.2 480.0 L500.6 448.5 L501.7 420.3 L504.1 394.5 L507.6 371.0 L510.0 366.3 L513.5 379.2 L515.8 360.5 L519.3 362.8 L521.7 345.2 L524.0 351.1 L526.4 332.3 L528.7 324.1 L531.1 335.8 L533.4 325.6 L535.8 342.9 L538.1 322.9 L538.8 323.5 L539.6 320.0 L540.5 318.9 L541.0 324.7 L541.9 312.2 L542.5 317.8 L543.3 329.7 L544.1 325.1 L545.2 345.4 L545.9 323.6 L546.9 350.6 L547.4 332.9 L548.5 340.2 L549.5 335.9 L550.5 333.8 L551.1 322.7 L551.9 328.4 L552.5 321.9 L553.1 332.3 L553.8 318.1 L554.8 320.5 L555.5 311.0 L556.1 320.1 L556.8 317.3 L557.9 332.4 L558.5 319.6 L559.1 337.0 L559.7 327.6 L560.5 337.8 L561.1 337.8 L562.0 345.4 L562.5 337.7 L563.4 353.0 L563.9 328.8 L564.7 342.2 L565.5 330.3 L566.6 340.6 L567.3 329.3 L567.8 332.1 L568.4 303.6 L569.4 328.0 L570.4 310.9 L571.3 321.0 L572.2 311.6 L573.2 325.4 L574.0 305.2 L574.6 346.2 L575.1 322.2 L575.7 339.6 L576.7 331.4 L577.5 350.0 L578.2 340.2 L579.0 350.8 L580.1 338.5 L580.7 342.5 L581.5 326.2 L582.3 331.9 L582.8 321.5 L583.8 325.9 L584.3 317.8 L584.9 323.2 L585.8 306.5 L586.4 331.4 L586.9 307.6 L588.0 327.8 L589.0 322.6 L590.0 334.3 L591.0 326.9 L591.8 340.6 L592.9 330.6 L594.0 342.1 L594.5 330.2 L595.2 338.4 L595.7 332.8 L596.8 343.2 L597.3 325.9 L598.1 333.9 L599.0 312.7 L599.9 319.6 L600.9 311.7 L601.9 321.1 L603.0 314.0 L603.8 324.6 L604.4 316.3 L604.9 330.2 L605.5 324.2 L606.2 340.4 L606.9 332.1 L607.9 359.9 L609.0 321.3 L609.5 345.1 L610.3 331.2 L611.2 339.1 L611.7 321.2 L612.5 327.4 L613.1 313.3 L614.2 317.7 L615.0 310.1 L615.7 321.7 L616.2 309.4 L617.0 317.8 L618.0 312.0 L619.0 329.3 L619.7 320.9 L620.5 337.6 L621.6 315.2 L622.6 348.4 L623.2 332.6 L623.8 332.5 L624.6 329.7 L625.2 331.1 L626.2 314.9 L626.9 323.8 L627.9 306.7 L628.9 315.1 L629.9 303.4 L630.6 313.3 L631.4 309.8 L632.3 326.4 L633.0 316.6 L633.7 334.0 L634.7 333.7 L635.6 324.6 L636.1 333.3 L637.0 341.7 L637.5 329.2 L638.4 334.9 L639.2 316.9 L640.0 325.1 L640.8 312.4 L641.4 319.6 L641.9 305.3 L642.7 310.2 L643.4 302.3 L644.4 318.7 L645.4 313.7 L646.4 328.3 L647.3 305.4 L647.9 325.3 L648.8 321.2 L649.7 334.1 L650.3 328.6 L651.1 337.3 L652.0 329.8 L652.7 333.3 L653.3 330.9 L654.2 306.7 L654.8 309.2 L655.5 319.8 L656.5 306.5 L657.5 314.2 L658.2 308.5 L659.1 319.8 L659.7 309.3 L660.4 322.2 L661.4 325.7 L662.3 328.8 L663.2 328.3 L664.1 335.6 L665.0 326.5 L665.8 338.0 L666.5 323.4 L667.2 332.9 L667.9 321.7 L668.8 327.1 L669.7 298.0 L670.6 318.6 L671.1 292.4 L671.7 311.2 L672.2 307.4 L673.0 320.2 L673.7 318.2 L674.5 328.8 L675.0 321.1 L675.5 333.3 L676.4 317.3 L677.1 343.9 L677.8 335.8 L678.5 338.9 L679.1 327.8 L679.6 339.7 L680.2 332.0 L680.8 336.6 L681.4 326.4 L682.1 332.6 L682.7 310.5 L683.6 318.3 L684.1 304.6 L684.9 315.1 L685.8 313.7 L686.5 326.1 L687.1 317.1 L688.2 332.2 L688.8 328.1 L689.3 342.3 L689.9 345.2 L690.4 342.8 L690.9 336.5 L691.9 340.8 L692.7 328.1 L693.4 344.5 L694.0 334.5 L694.9 338.4 L695.6 317.9 L696.3 329.9 L697.3 309.6 L698.2 322.9 L699.2 316.8 L699.9 322.7 L700.7 317.8 L701.2 327.4 L701.8 326.9 L702.8 332.9 L703.5 333.1 L704.6 343.2 L705.5 334.3 L706.4 347.3 L707.1 337.6 L707.7 346.3 L708.3 326.0 L709.1 340.1 L709.9 330.4 L711.0 336.2 L711.6 317.4 L712.3 336.6 L713.4 314.2 L714.2 323.4 L714.8 316.2 L715.4 329.7 L716.1 331.2 L717.0 346.8 L718.0 337.9 L718.9 357.6 L719.8 347.2 L720.3 348.7 L721.0 342.2 L721.5 349.1 L722.3 337.2 L723.3 337.4 L724.0 323.1 L724.9 341.8 L725.7 340.7 L726.5 335.0 L727.1 328.2 L727.8 342.0 L728.4 334.4 L729.0 352.8 L730.0 341.4 L731.0 351.3 L731.8 355.1 L732.5 356.2 L733.4 348.5 L734.0 361.4 L734.8 338.8 L735.4 353.7 L736.0 337.7 L736.6 346.3 L737.5 314.4 L738.5 333.4 L739.5 322.0 L740.3 340.7 L741.2 329.4 L741.9 346.0 L742.4 332.6 L743.0 344.5 L743.8 328.6 L744.7 355.1 L745.3 354.3 L746.2 367.0 L747.2 352.3 L747.7 371.9 L748.5 355.4 L749.4 362.0 L750.3 348.3 L751.2 347.6 L752.1 335.4 L753.0 341.0 L753.5 328.9 L754.4 344.8 L755.3 326.9 L756.1 349.2 L756.8 346.5 L757.6 348.3 L758.3 351.0 L759.0 354.6 L760.0 353.1 L762.5 371.7 L764.1 358.0 L765.8 369.6 L767.9 351.4 L768.7 357.6 L770.8 341.5 L772.4 346.9 L774.9 332.0 L776.1 335.7 L777.4 350.2 L779.4 338.6 L782.7 356.4 L786.5 335.7 L789.0 342.3 L791.0 346.1 L793.5 346.5 L796.4 341.9 L798.0 337.4 L800.5 335.3 L802.6 338.2 L805.1 336.5 L808.0 337.8 L811.3 335.3 L814.6 336.1 L816.2 339.0 L817.5 353.1 L818.7 372.9 L819.7 380.0 L821.9 426.4 L824.1 450.6 L826.3 468.3 L829.7 480.4 L831.9 478.2 L834.1 482.6 L837.4 502.5 L840.3 486.0 L841.8 499.2 L844.7 483.8 L847.3 503.6 L850.6 512.4 L852.8 521.3 L855.0 512.4 L857.3 532.3 L859.5 512.4 L862.8 523.5 L866.1 503.6 L869.4 510.2 L871.6 499.2 L872.3 502.1 L872.9 501.9 L873.4 512.5 L874.4 505.4 L875.5 502.1 L876.1 508.0 L877.1 511.2 L878.2 495.7 L879.3 497.5 L880.3 502.3 L880.9 495.1 L881.6 489.6 L882.7 506.5 L883.4 492.7 L884.1 502.6 L884.8 499.1 L885.5 519.8 L886.5 528.8 L887.2 526.6 L888.3 522.8 L889.1 532.8 L889.7 521.7 L890.5 527.8 L891.2 510.3 L892.0 521.7 L892.5 507.8 L893.6 529.9 L894.1 498.1 L894.7 505.8 L895.3 499.8 L896.1 507.6 L896.8 505.7 L897.5 519.4 L898.5 516.3 L899.5 535.5 L900.1 520.5 L900.8 533.2 L901.8 529.3 L902.6 538.6 L903.5 523.4 L904.0 508.8 L904.7 515.5 L905.8 506.0 L906.4 494.0 L907.1 514.2 L908.2 500.5 L909.1 513.7 L910.0 490.4 L911.0 516.6 L912.0 506.2 L912.8 519.4 L913.6 517.1 L914.2 506.5 L915.3 519.2 L916.2 536.9 L917.0 529.1 L917.9 541.2 L918.8 525.4 L919.6 542.9 L920.2 528.5 L920.8 531.0 L921.9 513.5 L923.0 518.7 L923.9 504.6 L924.4 517.6 L925.2 500.1 L926.2 518.1 L926.7 502.7 L927.4 518.9 L928.2 518.3 L929.2 536.2 L930.3 529.8 L931.3 542.4 L932.1 536.0 L932.9 556.2 L933.4 533.2 L934.5 532.5 L935.3 523.6 L936.3 524.7 L937.0 510.5 L937.5 523.0 L938.4 511.6 L938.9 529.7 L939.7 503.3 L940.5 521.9 L941.6 507.8 L942.5 518.5 L943.2 518.9 L944.0 533.8 L945.0 533.3 L945.9 546.0 L946.9 538.2 L947.6 540.2 L948.3 531.9 L948.9 538.8 L949.5 525.9 L950.1 535.3 L950.8 513.4 L951.4 529.7 L952.3 510.2 L953.1 521.3 L954.0 511.2 L954.9 521.1 L955.6 508.9 L956.4 523.0 L957.3 511.7 L958.0 535.3 L959.0 531.5 L959.6 544.2 L960.6 529.7 L961.5 529.2 L962.2 530.0 L963.2 533.2 L963.8 517.7 L964.4 529.5 L965.2 507.6 L965.9 514.0 L967.0 509.6 L967.7 520.5 L968.2 515.0 L969.3 526.3 L970.0 521.4 L970.9 536.3 L971.5 524.3 L972.1 542.4 L972.8 525.5 L973.7 540.7 L974.3 534.5 L975.1 545.2 L975.8 535.7 L976.5 538.1 L977.4 519.6 L978.3 540.5 L979.2 515.0 L979.7 516.2 L980.5 507.4 L981.1 505.9 L981.7 536.1 L982.7 528.0 L983.2 516.5 L984.1 541.3 L984.8 543.9 L985.8 541.8 L986.5 525.1 L987.6 548.1 L988.5 532.0 L989.3 538.5 L990.3 525.5 L991.1 519.2 L991.8 511.4 L992.5 520.6 L993.6 490.8 L994.1 515.5 L994.9 508.1 L996.0 519.7 L997.0 518.1 L997.8 529.9 L998.9 538.4 L999.5 544.2 L1000.6 529.5 L1001.2 560.7 L1002.0 538.0 L1002.8 559.1 L1003.3 526.1 L1003.9 534.1 L1004.7 518.6 L1005.2 555.0 L1005.9 516.3 L1006.8 518.6 L1007.6 527.2 L1008.6 519.5 L1009.2 512.6 L1009.8 516.1 L1010.4 512.7 L1011.2 521.5 L1011.9 518.0 L1012.5 537.5 L1013.2 524.2 L1013.8 540.8 L1014.8 529.2 L1015.8 545.7 L1016.5 527.8 L1017.3 527.1 L1017.9 518.5 L1018.6 533.2 L1019.2 515.3 L1020.2 519.7 L1021.2 489.4 L1022.0 516.8 L1022.8 502.7 L1023.7 513.7 L1024.6 492.2 L1025.3 521.5 L1025.8 515.7 L1026.5 525.2 L1027.4 525.9 L1028.1 536.2 L1028.9 531.0 L1029.6 546.1 L1030.5 535.1 L1031.1 538.9 L1031.7 522.4 L1032.7 523.9 L1033.3 509.6 L1034.1 535.4 L1034.7 502.0 L1035.3 518.1 L1036.2 501.4 L1036.9 514.7 L1037.7 500.7 L1038.4 512.2 L1039.4 505.8 L1040.5 510.7 L1041.2 520.2 L1042.1 530.1 L1043.1 519.9 L1043.9 553.9 L1045.0 527.8 L1045.6 526.9 L1046.7 511.3 L1047.3 519.5 L1048.3 508.4 L1049.2 517.7 L1050.2 502.2 L1050.8 502.8 L1051.5 495.7 L1052.1 511.4 L1053.0 501.1 L1053.6 509.8 L1054.3 499.9 L1054.8 519.0 L1055.5 507.6 L1056.1 523.2 L1057.2 515.7 L1058.0 543.6 L1058.7 519.5 L1059.7 527.3 L1060.3 520.5 L1061.1 533.5 L1061.8 514.5 L1062.5 520.6 L1063.3 505.2 L1063.9 501.1 L1064.5 492.5 L1065.2 500.6 L1066.3 500.5 L1067.3 512.1 L1068.0 507.8 L1068.5 515.0 L1070.0 512.5 L1071.4 530.4 L1072.4 508.6 L1073.9 505.7 L1075.3 489.3 L1076.8 502.9 L1077.7 490.3 L1078.7 507.2 L1080.4 482.1 L1081.6 498.5 L1083.0 486.9 L1084.5 501.9 L1085.9 486.9 L1087.4 498.5 L1089.8 482.1 L1091.3 496.6 L1093.2 491.7 L1095.6 511.5 L1097.5 500.0 L1100.0 517.8 L1102.9 507.7 L1105.7 524.1 L1110.6 503.3 L1114.4 510.6 L1118.3 517.3 L1122.2 520.7 L1128.0 518.8 L1133.8 518.8 L1137.6 519.3 L1138.8 497.0 L1140.5 479.7 L1140.7 480.0 L1144.9 426.2 L1147.4 398.0 L1150.7 376.6 L1152.0 366.0" fill="none" stroke="#f018f0" stroke-width="1.6" stroke-linejoin="round"/></g><rect x="402" y="425.7" width="749" height="1.7" fill="#f01010"/><g clip-path="url(#pc)"><path d="M402.0 468.7 L402.5 467.8 L403.0 466.9 L403.5 466.1 L404.0 465.2 L404.5 464.3 L405.0 463.4 L405.5 462.5 L406.0 461.6 L406.5 460.7 L407.0 459.8 L407.5 458.9 L408.0 458.0 L408.5 457.1 L409.0 456.2 L409.5 455.3 L410.0 454.4 L410.5 453.6 L411.0 452.7 L411.5 451.8 L412.0 450.9 L412.5 450.0 L413.0 449.1 L413.5 448.2 L414.0 447.3 L414.5 446.4 L415.0 445.5 L415.5 444.6 L416.0 443.7 L416.5 442.8 L417.0 441.9 L417.5 441.1 L418.0 440.2 L418.5 439.3 L419.0 438.4 L419.5 437.5 L420.0 436.6 L420.5 435.7 L421.0 434.8 L421.5 433.9 L422.0 433.0 L422.5 432.1 L423.0 431.2 L423.5 430.3 L424.0 429.5 L424.5 428.6 L425.0 427.7 L425.5 426.8 L426.0 425.9 L426.5 425.0 L427.0 424.1 L427.5 423.2 L428.0 422.3 L428.5 421.4 L429.0 420.5 L429.5 419.6 L430.0 418.7 L430.5 417.8 L431.0 417.0 L431.5 416.1 L432.0 415.2 L432.5 414.3 L433.0 413.4 L433.5 412.5 L434.0 411.6 L434.5 410.7 L435.0 409.8 L435.5 408.9 L436.0 408.0 L436.5 407.1 L437.0 406.2 L437.5 405.3 L438.0 404.5 L438.5 403.6 L439.0 402.7 L439.5 401.8 L440.0 400.9 L440.5 400.0 L441.0 399.1 L441.5 398.2 L442.0 397.3 L442.5 396.4 L443.0 395.5 L443.5 394.6 L444.0 393.7 L444.5 392.9 L445.0 392.0 L445.5 391.1 L446.0 390.2 L446.5 389.3 L447.0 388.4 L447.5 387.5 L448.0 386.6 L448.5 385.7 L449.0 384.8 L449.5 383.9 L450.0 383.0 L450.5 382.1 L451.0 381.2 L451.5 380.4 L452.0 379.5 L452.5 378.6 L453.0 377.7 L453.5 376.8 L454.0 375.9 L454.5 375.0 L455.0 374.1 L455.5 373.2 L456.0 372.3 L456.5 371.4 L457.0 370.5 L457.5 369.6 L458.0 368.7 L458.5 367.9 L459.0 367.0 L459.5 366.1 L460.0 365.2 L460.5 364.3 L461.0 363.4 L461.5 362.5 L462.0 361.6 L462.5 360.7 L463.0 359.8 L463.5 358.9 L464.0 358.0 L464.5 357.1 L465.0 356.2 L465.5 355.4 L466.0 354.5 L466.5 353.6 L467.0 352.7 L467.5 351.8 L468.0 350.9 L468.5 350.0 L469.0 349.1 L469.5 348.2 L470.0 347.3 L470.5 346.4 L471.0 345.5 L471.5 344.6 L472.0 343.8 L472.5 342.9 L473.0 342.0 L473.5 341.1 L474.0 340.3 L474.5 339.5 L475.0 338.8 L475.5 338.2 L476.0 337.6 L476.5 337.1 L477.0 336.6 L477.5 336.2 L478.0 335.8 L478.5 335.5 L479.0 335.1 L479.5 334.8 L480.0 334.6 L480.5 334.3 L481.0 334.1 L481.5 333.9 L482.0 333.7 L482.5 333.5 L483.0 333.4 L483.5 333.2 L484.0 333.1 L484.5 333.0 L485.0 332.8 L485.5 332.7 L486.0 332.7 L486.5 332.6 L487.0 332.5 L487.5 332.4 L488.0 332.4 L488.5 332.3 L489.0 332.3 L489.5 332.2 L490.0 332.2 L490.5 332.1 L491.0 332.1 L491.5 332.1 L492.0 332.0 L492.5 332.0 L493.0 332.0 L493.5 331.9 L494.0 331.9 L494.5 331.9 L495.0 331.9 L495.5 331.7 L496.0 331.5 L496.5 331.3 L497.0 331.0 L497.5 330.6 L498.0 330.2 L498.5 329.8 L499.0 329.3 L499.5 328.7 L500.0 328.2 L500.5 327.6 L501.0 326.9 L501.5 326.3 L502.0 325.6 L502.5 324.9 L503.0 324.2 L503.5 323.5 L504.0 322.8 L504.5 322.0 L505.0 321.2 L505.5 320.4 L506.0 319.6 L506.5 318.8 L507.0 318.0 L507.5 317.2 L508.0 316.4 L508.5 315.5 L509.0 314.7 L509.5 313.8 L510.0 313.0 L510.5 312.1 L511.0 311.3 L511.5 310.4 L512.0 309.5 L512.5 308.6 L513.0 307.8 L513.5 306.9 L514.0 306.0 L514.5 305.1 L515.0 304.2 L515.5 303.3 L516.0 302.4 L516.5 301.6 L517.0 300.7 L517.5 299.8 L518.0 298.9 L518.5 298.0 L519.0 297.1 L519.5 296.2 L520.0 295.3 L520.5 294.4 L521.0 293.5 L521.5 292.6 L522.0 291.6 L522.5 290.7 L523.0 289.8 L523.5 288.9 L524.0 288.0 L524.5 287.1 L525.0 286.2 L525.5 285.3 L526.0 284.4 L526.5 283.5 L527.0 282.6 L527.5 281.7 L528.0 280.8 L528.5 279.8 L529.0 278.9 L529.5 278.0 L530.0 277.1 L530.5 276.2 L531.0 275.3 L531.5 274.4 L532.0 273.5 L532.5 272.6 L533.0 271.7 L533.5 270.8 L534.0 269.8 L534.5 268.9 L535.0 268.0 L535.5 267.1 L536.0 266.2 L536.5 265.3 L537.0 264.4 L537.5 263.5 L538.0 262.6 L538.5 261.6 L539.0 260.7 L539.5 259.8 L540.0 258.9 L540.5 258.0 L541.0 257.1 L541.5 256.2 L542.0 255.3 L542.5 254.4 L543.0 253.5 L543.5 252.5 L544.0 251.6 L544.5 250.7 L545.0 249.8 L545.5 248.9 L546.0 248.0 L546.5 247.1 L547.0 246.2 L547.5 245.3 L548.0 244.3 L548.5 243.4 L549.0 242.5 L549.5 241.6 L550.0 240.7 L550.5 239.8 L551.0 238.9 L551.5 238.0 L552.0 237.1 L552.5 236.1 L553.0 235.2 L553.5 234.3 L554.0 233.4 L554.5 232.5 L555.0 231.6 L555.5 230.7 L556.0 229.8 L556.5 228.9 L557.0 227.9 L557.5 227.0 L558.0 226.1 L558.5 225.2 L559.0 224.3 L559.5 223.4 L560.0 222.5 L560.5 221.6 L561.0 220.7 L561.5 219.7 L562.0 218.8 L562.5 217.9 L563.0 217.0 L563.5 216.1 L564.0 215.2 L564.5 214.3 L565.0 213.4 L565.5 212.5 L566.0 211.5 L566.5 210.6 L567.0 209.7 L567.5 208.8 L568.0 207.9 L568.5 207.0 L569.0 206.1 L569.5 205.2 L570.0 204.3 L570.5 203.4 L571.0 202.4 L571.5 201.5 L572.0 200.6 L572.5 199.7 L573.0 198.8 L573.5 197.9 L574.0 197.0 L574.5 196.1 L575.0 195.2 L575.5 194.2 L576.0 193.3 L576.5 192.4 L577.0 191.5 L577.5 190.6 L578.0 189.7 L578.5 188.8 L579.0 187.9 L579.5 187.0 L580.0 186.0 L580.5 185.1 L581.0 184.2 L581.5 183.3 L582.0 182.4 L582.5 181.5 L583.0 180.6 L583.5 179.7 L584.0 178.8 L584.5 177.8 L585.0 176.9 L585.5 176.0 L586.0 175.1 L586.5 174.2 L587.0 173.3 L587.5 172.4 L588.0 171.5 L588.5 170.6 L589.0 169.6 L589.5 168.7 L590.0 167.8 L590.5 166.9 L591.0 166.0 L591.5 165.1 L592.0 164.2 L592.5 163.3 L593.0 162.4 L593.5 161.4 L594.0 160.5 L594.5 159.6 L595.0 158.7 L595.5 157.8 L596.0 156.9 L596.5 156.0 L597.0 155.1 L597.5 154.2 L598.0 153.3 L598.5 152.3 L599.0 151.4 L599.5 150.6 L600.0 149.8 L600.5 149.0 L601.0 148.4 L601.5 147.8 L602.0 147.2 L602.5 146.7 L603.0 146.3 L603.5 145.9 L604.0 145.5 L604.5 145.1 L605.0 144.8 L605.5 144.5 L606.0 144.3 L606.5 144.0 L607.0 143.8 L607.5 143.6 L608.0 143.4 L608.5 143.3 L609.0 143.1 L609.5 143.0 L610.0 142.8 L610.5 142.7 L611.0 142.6 L611.5 142.5 L612.0 142.4 L612.5 142.3 L613.0 142.3 L613.5 142.2 L614.0 142.1 L614.5 142.1 L615.0 142.0 L615.5 142.0 L616.0 141.9 L616.5 141.9 L617.0 141.9 L617.5 141.8 L618.0 141.8 L618.5 141.8 L619.0 141.8 L619.5 141.8 L620.0 141.8 L620.5 141.8 L621.0 141.8 L621.5 141.8 L622.0 141.8 L622.5 141.8 L623.0 141.8 L623.5 141.8 L624.0 141.8 L624.5 141.8 L625.0 141.8 L625.5 141.8 L626.0 141.8 L626.5 141.8 L627.0 141.8 L627.5 141.8 L628.0 141.8 L628.5 141.8 L629.0 141.8 L629.5 141.8 L630.0 141.8 L630.5 141.8 L631.0 141.8 L631.5 141.8 L632.0 141.8 L632.5 141.8 L633.0 141.8 L633.5 141.8 L634.0 141.8 L634.5 141.8 L635.0 141.8 L635.5 141.8 L636.0 141.8 L636.5 141.8 L637.0 141.8 L637.5 141.8 L638.0 141.8 L638.5 141.8 L639.0 141.8 L639.5 141.8 L640.0 141.8 L640.5 141.8 L641.0 141.8 L641.5 141.8 L642.0 141.8 L642.5 141.8 L643.0 141.8 L643.5 141.8 L644.0 141.8 L644.5 141.8 L645.0 141.8 L645.5 141.8 L646.0 141.8 L646.5 141.8 L647.0 141.8 L647.5 141.8 L648.0 141.8 L648.5 141.8 L649.0 141.8 L649.5 141.8 L650.0 141.8 L650.5 141.8 L651.0 141.8 L651.5 141.8 L652.0 141.8 L652.5 141.8 L653.0 141.8 L653.5 141.8 L654.0 141.8 L654.5 141.8 L655.0 141.8 L655.5 141.8 L656.0 141.8 L656.5 141.8 L657.0 141.8 L657.5 141.8 L658.0 141.8 L658.5 141.8 L659.0 141.8 L659.5 141.8 L660.0 141.8 L660.5 141.8 L661.0 141.8 L661.5 141.8 L662.0 141.8 L662.5 141.8 L663.0 141.8 L663.5 141.8 L664.0 141.8 L664.5 141.8 L665.0 141.8 L665.5 141.8 L666.0 141.8 L666.5 141.8 L667.0 141.8 L667.5 141.8 L668.0 141.8 L668.5 141.8 L669.0 141.8 L669.5 141.8 L670.0 141.8 L670.5 141.8 L671.0 141.8 L671.5 141.8 L672.0 141.8 L672.5 141.8 L673.0 141.8 L673.5 141.8 L674.0 141.8 L674.5 141.8 L675.0 141.8 L675.5 141.8 L676.0 141.8 L676.5 141.8 L677.0 141.8 L677.5 141.8 L678.0 141.8 L678.5 141.8 L679.0 141.8 L679.5 141.8 L680.0 141.8 L680.5 141.8 L681.0 141.8 L681.5 141.8 L682.0 141.8 L682.5 141.8 L683.0 141.8 L683.5 141.8 L684.0 141.8 L684.5 141.8 L685.0 141.8 L685.5 141.8 L686.0 141.8 L686.5 141.8 L687.0 141.8 L687.5 141.8 L688.0 141.8 L688.5 141.8 L689.0 141.8 L689.5 141.8 L690.0 141.8 L690.5 141.8 L691.0 141.8 L691.5 141.8 L692.0 141.9 L692.5 142.2 L693.0 142.5 L693.5 142.8 L694.0 143.3 L694.5 143.7 L695.0 144.2 L695.5 144.8 L696.0 145.3 L696.5 145.9 L697.0 146.5 L697.5 147.2 L698.0 147.9 L698.5 148.6 L699.0 149.3 L699.5 150.0 L700.0 150.7 L700.5 151.5 L701.0 152.3 L701.5 153.0 L702.0 153.8 L702.5 154.6 L703.0 155.5 L703.5 156.3 L704.0 157.1 L704.5 157.9 L705.0 158.8 L705.5 159.6 L706.0 160.5 L706.5 161.3 L707.0 162.2 L707.5 163.1 L708.0 163.9 L708.5 164.8 L709.0 165.7 L709.5 166.6 L710.0 167.4 L710.5 168.3 L711.0 169.2 L711.5 170.1 L712.0 171.0 L712.5 171.9 L713.0 172.8 L713.5 173.6 L714.0 174.5 L714.5 175.4 L715.0 176.3 L715.5 177.2 L716.0 178.1 L716.5 179.0 L717.0 179.9 L717.5 180.8 L718.0 181.7 L718.5 182.6 L719.0 183.5 L719.5 184.4 L720.0 185.3 L720.5 186.2 L721.0 187.1 L721.5 188.0 L722.0 188.9 L722.5 189.8 L723.0 190.8 L723.5 191.7 L724.0 192.6 L724.5 193.5 L725.0 194.4 L725.5 195.3 L726.0 196.2 L726.5 197.1 L727.0 198.0 L727.5 198.9 L728.0 199.8 L728.5 200.7 L729.0 201.6 L729.5 202.5 L730.0 203.4 L730.5 204.3 L731.0 205.2 L731.5 206.1 L732.0 207.1 L732.5 208.0 L733.0 208.9 L733.5 209.8 L734.0 210.7 L734.5 211.6 L735.0 212.5 L735.5 213.4 L736.0 214.3 L736.5 215.2 L737.0 216.1 L737.5 217.0 L738.0 217.9 L738.5 218.8 L739.0 219.7 L739.5 220.6 L740.0 221.6 L740.5 222.5 L741.0 223.4 L741.5 224.3 L742.0 225.2 L742.5 226.1 L743.0 227.0 L743.5 227.9 L744.0 228.8 L744.5 229.7 L745.0 230.6 L745.5 231.5 L746.0 232.4 L746.5 233.3 L747.0 234.2 L747.5 235.1 L748.0 236.1 L748.5 237.0 L749.0 237.9 L749.5 238.8 L750.0 239.7 L750.5 240.6 L751.0 241.5 L751.5 242.4 L752.0 243.3 L752.5 244.2 L753.0 245.1 L753.5 246.0 L754.0 246.9 L754.5 247.8 L755.0 248.7 L755.5 249.7 L756.0 250.6 L756.5 251.5 L757.0 252.4 L757.5 253.3 L758.0 254.2 L758.5 255.1 L759.0 256.0 L759.5 256.9 L760.0 257.8 L760.5 258.7 L761.0 259.6 L761.5 260.5 L762.0 261.4 L762.5 262.3 L763.0 263.3 L763.5 264.2 L764.0 265.1 L764.5 266.0 L765.0 266.9 L765.5 267.8 L766.0 268.7 L766.5 269.6 L767.0 270.5 L767.5 271.4 L768.0 272.3 L768.5 273.2 L769.0 274.1 L769.5 275.0 L770.0 275.9 L770.5 276.9 L771.0 277.8 L771.5 278.7 L772.0 279.6 L772.5 280.5 L773.0 281.4 L773.5 282.3 L774.0 283.2 L774.5 284.1 L775.0 285.0 L775.5 285.9 L776.0 286.8 L776.5 287.7 L777.0 288.6 L777.5 289.5 L778.0 290.5 L778.5 291.4 L779.0 292.3 L779.5 293.2 L780.0 294.1 L780.5 295.0 L781.0 295.9 L781.5 296.8 L782.0 297.7 L782.5 298.6 L783.0 299.5 L783.5 300.4 L784.0 301.3 L784.5 302.2 L785.0 303.1 L785.5 304.0 L786.0 305.0 L786.5 305.9 L787.0 306.8 L787.5 307.7 L788.0 308.6 L788.5 309.5 L789.0 310.4 L789.5 311.3 L790.0 312.2 L790.5 313.1 L791.0 314.0 L791.5 314.9 L792.0 315.8 L792.5 316.7 L793.0 317.6 L793.5 318.6 L794.0 319.5 L794.5 320.4 L795.0 321.3 L795.5 322.2 L796.0 323.0 L796.5 323.8 L797.0 324.5 L797.5 325.1 L798.0 325.7 L798.5 326.2 L799.0 326.7 L799.5 327.1 L800.0 327.5 L800.5 327.9 L801.0 328.2 L801.5 328.5 L802.0 328.8 L802.5 329.0 L803.0 329.3 L803.5 329.5 L804.0 329.7 L804.5 329.9 L805.0 330.0 L805.5 330.2 L806.0 330.3 L806.5 330.4 L807.0 330.5 L807.5 330.6 L808.0 330.7 L808.5 330.8 L809.0 330.9 L809.5 331.0 L810.0 331.0 L810.5 331.1 L811.0 331.1 L811.5 331.2 L812.0 331.2 L812.5 331.3 L813.0 331.3 L813.5 331.3 L814.0 331.4 L814.5 331.4 L815.0 331.4 L815.5 331.5 L816.0 331.6 L816.5 331.7 L817.0 332.0 L817.5 332.2 L818.0 332.6 L818.5 333.0 L819.0 333.4 L819.5 333.9 L820.0 334.4 L820.5 335.0 L821.0 335.6 L821.5 336.2 L822.0 336.8 L822.5 337.5 L823.0 338.1 L823.5 338.8 L824.0 339.6 L824.5 340.3 L825.0 341.0 L825.5 341.8 L826.0 342.6 L826.5 343.4 L827.0 344.2 L827.5 345.0 L828.0 345.8 L828.5 346.6 L829.0 347.5 L829.5 348.3 L830.0 349.1 L830.5 350.0 L831.0 350.8 L831.5 351.7 L832.0 352.6 L832.5 353.4 L833.0 354.3 L833.5 355.2 L834.0 356.0 L834.5 356.9 L835.0 357.8 L835.5 358.7 L836.0 359.6 L836.5 360.5 L837.0 361.4 L837.5 362.2 L838.0 363.1 L838.5 364.0 L839.0 364.9 L839.5 365.8 L840.0 366.7 L840.5 367.6 L841.0 368.5 L841.5 369.4 L842.0 370.3 L842.5 371.2 L843.0 372.1 L843.5 373.0 L844.0 373.9 L844.5 374.8 L845.0 375.7 L845.5 376.6 L846.0 377.5 L846.5 378.4 L847.0 379.3 L847.5 380.2 L848.0 381.1 L848.5 382.0 L849.0 383.0 L849.5 383.9 L850.0 384.8 L850.5 385.7 L851.0 386.6 L851.5 387.5 L852.0 388.4 L852.5 389.3 L853.0 390.2 L853.5 391.1 L854.0 392.0 L854.5 392.9 L855.0 393.8 L855.5 394.7 L856.0 395.6 L856.5 396.5 L857.0 397.4 L857.5 398.4 L858.0 399.3 L858.5 400.2 L859.0 401.1 L859.5 402.0 L860.0 402.9 L860.5 403.8 L861.0 404.7 L861.5 405.6 L862.0 406.5 L862.5 407.4 L863.0 408.3 L863.5 409.2 L864.0 410.1 L864.5 411.0 L865.0 412.0 L865.5 412.9 L866.0 413.8 L866.5 414.7 L867.0 415.6 L867.5 416.5 L868.0 417.4 L868.5 418.3 L869.0 419.2 L869.5 420.1 L870.0 421.0 L870.5 421.9 L871.0 422.8 L871.5 423.7 L872.0 424.6 L872.5 425.6 L873.0 426.5 L873.5 427.4 L874.0 428.3 L874.5 429.2 L875.0 430.1 L875.5 431.0 L876.0 431.9 L876.5 432.8 L877.0 433.7 L877.5 434.6 L878.0 435.5 L878.5 436.4 L879.0 437.3 L879.5 438.2 L880.0 439.2 L880.5 440.1 L881.0 441.0 L881.5 441.9 L882.0 442.8 L882.5 443.7 L883.0 444.6 L883.5 445.5 L884.0 446.4 L884.5 447.3 L885.0 448.2 L885.5 449.1 L886.0 450.0 L886.5 450.9 L887.0 451.8 L887.5 452.8 L888.0 453.7 L888.5 454.6 L889.0 455.5 L889.5 456.4 L890.0 457.3 L890.5 458.2 L891.0 459.1 L891.5 460.0 L892.0 460.9 L892.5 461.8 L893.0 462.7 L893.5 463.6 L894.0 464.5 L894.5 465.5 L895.0 466.4 L895.5 467.3 L896.0 468.2 L896.5 469.1 L897.0 470.0 L897.5 470.9 L898.0 471.8 L898.5 472.7 L899.0 473.6 L899.5 474.5 L900.0 475.4 L900.5 476.3 L901.0 477.2 L901.5 478.1 L902.0 479.1 L902.5 480.0 L903.0 480.9 L903.5 481.8 L904.0 482.7 L904.5 483.6 L905.0 484.5 L905.5 485.4 L906.0 486.3 L906.5 487.2 L907.0 488.1 L907.5 489.0 L908.0 489.9 L908.5 490.8 L909.0 491.7 L909.5 492.7 L910.0 493.6 L910.5 494.5 L911.0 495.4 L911.5 496.3 L912.0 497.2 L912.5 498.1 L913.0 499.0 L913.5 499.9 L914.0 500.8 L914.5 501.7 L915.0 502.6 L915.5 503.5 L916.0 504.4 L916.5 505.3 L917.0 506.3 L917.5 507.2 L918.0 508.1 L918.5 509.0 L919.0 509.9 L919.5 510.8 L920.0 511.7 L920.5 512.5 L921.0 513.3 L921.5 514.0 L922.0 514.7 L922.5 515.3 L923.0 515.8 L923.5 516.3 L924.0 516.7 L924.5 517.1 L925.0 517.5 L925.5 517.8 L926.0 518.2 L926.5 518.4 L927.0 518.7 L927.5 518.9 L928.0 519.1 L928.5 519.3 L929.0 519.5 L929.5 519.7 L930.0 519.8 L930.5 520.0 L931.0 520.1 L931.5 520.2 L932.0 520.3 L932.5 520.4 L933.0 520.5 L933.5 520.6 L934.0 520.6 L934.5 520.7 L935.0 520.8 L935.5 520.8 L936.0 520.9 L936.5 520.9 L937.0 521.0 L937.5 521.0 L938.0 521.0 L938.5 521.1 L939.0 521.1 L939.5 521.1 L940.0 521.1 L940.5 521.2 L941.0 521.2 L941.5 521.2 L942.0 521.2 L942.5 521.2 L943.0 521.3 L943.5 521.3 L944.0 521.3 L944.5 521.3 L945.0 521.3 L945.5 521.3 L946.0 521.3 L946.5 521.3 L947.0 521.3 L947.5 521.3 L948.0 521.3 L948.5 521.3 L949.0 521.4 L949.5 521.4 L950.0 521.4 L950.5 521.4 L951.0 521.4 L951.5 521.4 L952.0 521.4 L952.5 521.4 L953.0 521.4 L953.5 521.4 L954.0 521.4 L954.5 521.4 L955.0 521.4 L955.5 521.4 L956.0 521.4 L956.5 521.4 L957.0 521.4 L957.5 521.4 L958.0 521.4 L958.5 521.4 L959.0 521.4 L959.5 521.4 L960.0 521.4 L960.5 521.4 L961.0 521.4 L961.5 521.4 L962.0 521.4 L962.5 521.4 L963.0 521.4 L963.5 521.4 L964.0 521.4 L964.5 521.4 L965.0 521.4 L965.5 521.4 L966.0 521.4 L966.5 521.4 L967.0 521.4 L967.5 521.4 L968.0 521.4 L968.5 521.4 L969.0 521.4 L969.5 521.4 L970.0 521.4 L970.5 521.4 L971.0 521.4 L971.5 521.4 L972.0 521.4 L972.5 521.4 L973.0 521.4 L973.5 521.4 L974.0 521.4 L974.5 521.4 L975.0 521.4 L975.5 521.4 L976.0 521.4 L976.5 521.4 L977.0 521.4 L977.5 521.4 L978.0 521.4 L978.5 521.4 L979.0 521.4 L979.5 521.4 L980.0 521.4 L980.5 521.4 L981.0 521.4 L981.5 521.4 L982.0 521.4 L982.5 521.4 L983.0 521.4 L983.5 521.4 L984.0 521.4 L984.5 521.4 L985.0 521.4 L985.5 521.4 L986.0 521.4 L986.5 521.4 L987.0 521.4 L987.5 521.4 L988.0 521.4 L988.5 521.4 L989.0 521.4 L989.5 521.4 L990.0 521.4 L990.5 521.4 L991.0 521.4 L991.5 521.4 L992.0 521.4 L992.5 521.4 L993.0 521.4 L993.5 521.4 L994.0 521.4 L994.5 521.4 L995.0 521.4 L995.5 521.4 L996.0 521.4 L996.5 521.4 L997.0 521.4 L997.5 521.4 L998.0 521.4 L998.5 521.4 L999.0 521.4 L999.5 521.4 L1000.0 521.4 L1000.5 521.4 L1001.0 521.4 L1001.5 521.4 L1002.0 521.4 L1002.5 521.4 L1003.0 521.4 L1003.5 521.4 L1004.0 521.4 L1004.5 521.4 L1005.0 521.4 L1005.5 521.4 L1006.0 521.4 L1006.5 521.4 L1007.0 521.4 L1007.5 521.4 L1008.0 521.4 L1008.5 521.4 L1009.0 521.4 L1009.5 521.4 L1010.0 521.4 L1010.5 521.4 L1011.0 521.4 L1011.5 521.4 L1012.0 521.4 L1012.5 521.4 L1013.0 521.3 L1013.5 521.2 L1014.0 521.0 L1014.5 520.7 L1015.0 520.3 L1015.5 520.0 L1016.0 519.5 L1016.5 519.1 L1017.0 518.6 L1017.5 518.0 L1018.0 517.4 L1018.5 516.8 L1019.0 516.2 L1019.5 515.5 L1020.0 514.9 L1020.5 514.2 L1021.0 513.4 L1021.5 512.7 L1022.0 511.9 L1022.5 511.2 L1023.0 510.4 L1023.5 509.6 L1024.0 508.8 L1024.5 508.0 L1025.0 507.2 L1025.5 506.4 L1026.0 505.5 L1026.5 504.7 L1027.0 503.8 L1027.5 503.0 L1028.0 502.1 L1028.5 501.3 L1029.0 500.4 L1029.5 499.5 L1030.0 498.6 L1030.5 497.8 L1031.0 496.9 L1031.5 496.0 L1032.0 495.1 L1032.5 494.2 L1033.0 493.3 L1033.5 492.4 L1034.0 491.5 L1034.5 490.6 L1035.0 489.7 L1035.5 488.8 L1036.0 487.9 L1036.5 487.0 L1037.0 486.1 L1037.5 485.2 L1038.0 484.3 L1038.5 483.4 L1039.0 482.5 L1039.5 481.6 L1040.0 480.7 L1040.5 479.8 L1041.0 478.9 L1041.5 478.0 L1042.0 477.1 L1042.5 476.2 L1043.0 475.3 L1043.5 474.4 L1044.0 473.4 L1044.5 472.5 L1045.0 471.6 L1045.5 470.7 L1046.0 469.8 L1046.5 468.9 L1047.0 468.0 L1047.5 467.1 L1048.0 466.2 L1048.5 465.2 L1049.0 464.3 L1049.5 463.4 L1050.0 462.5 L1050.5 461.6 L1051.0 460.7 L1051.5 459.8 L1052.0 458.9 L1052.5 457.9 L1053.0 457.0 L1053.5 456.1 L1054.0 455.2 L1054.5 454.3 L1055.0 453.4 L1055.5 452.5 L1056.0 451.6 L1056.5 450.6 L1057.0 449.7 L1057.5 448.8 L1058.0 447.9 L1058.5 447.0 L1059.0 446.1 L1059.5 445.2 L1060.0 444.3 L1060.5 443.3 L1061.0 442.4 L1061.5 441.5 L1062.0 440.6 L1062.5 439.7 L1063.0 438.8 L1063.5 437.9 L1064.0 437.0 L1064.5 436.0 L1065.0 435.1 L1065.5 434.2 L1066.0 433.3 L1066.5 432.4 L1067.0 431.5 L1067.5 430.6 L1068.0 429.7 L1068.5 428.7 L1069.0 427.8 L1069.5 426.9 L1070.0 426.0 L1070.5 425.1 L1071.0 424.2 L1071.5 423.3 L1072.0 422.4 L1072.5 421.4 L1073.0 420.5 L1073.5 419.6 L1074.0 418.7 L1074.5 417.8 L1075.0 416.9 L1075.5 416.0 L1076.0 415.0 L1076.5 414.1 L1077.0 413.2 L1077.5 412.3 L1078.0 411.4 L1078.5 410.5 L1079.0 409.6 L1079.5 408.7 L1080.0 407.7 L1080.5 406.8 L1081.0 405.9 L1081.5 405.0 L1082.0 404.1 L1082.5 403.2 L1083.0 402.3 L1083.5 401.4 L1084.0 400.4 L1084.5 399.5 L1085.0 398.6 L1085.5 397.7 L1086.0 396.8 L1086.5 395.9 L1087.0 395.0 L1087.5 394.1 L1088.0 393.1 L1088.5 392.2 L1089.0 391.3 L1089.5 390.4 L1090.0 389.5 L1090.5 388.6 L1091.0 387.7 L1091.5 386.7 L1092.0 385.8 L1092.5 384.9 L1093.0 384.0 L1093.5 383.1 L1094.0 382.2 L1094.5 381.3 L1095.0 380.4 L1095.5 379.4 L1096.0 378.5 L1096.5 377.6 L1097.0 376.7 L1097.5 375.8 L1098.0 374.9 L1098.5 374.0 L1099.0 373.1 L1099.5 372.1 L1100.0 371.2 L1100.5 370.3 L1101.0 369.4 L1101.5 368.5 L1102.0 367.6 L1102.5 366.7 L1103.0 365.8 L1103.5 364.8 L1104.0 363.9 L1104.5 363.0 L1105.0 362.1 L1105.5 361.2 L1106.0 360.3 L1106.5 359.4 L1107.0 358.4 L1107.5 357.5 L1108.0 356.6 L1108.5 355.7 L1109.0 354.8 L1109.5 353.9 L1110.0 353.0 L1110.5 352.1 L1111.0 351.1 L1111.5 350.2 L1112.0 349.3 L1112.5 348.4 L1113.0 347.5 L1113.5 346.6 L1114.0 345.7 L1114.5 344.8 L1115.0 343.8 L1115.5 342.9 L1116.0 342.0 L1116.5 341.1 L1117.0 340.3 L1117.5 339.5 L1118.0 338.9 L1118.5 338.2 L1119.0 337.7 L1119.5 337.1 L1120.0 336.7 L1120.5 336.2 L1121.0 335.8 L1121.5 335.5 L1122.0 335.1 L1122.5 334.8 L1123.0 334.6 L1123.5 334.3 L1124.0 334.1 L1124.5 333.9 L1125.0 333.7 L1125.5 333.5 L1126.0 333.4 L1126.5 333.2 L1127.0 333.1 L1127.5 333.0 L1128.0 332.9 L1128.5 332.8 L1129.0 332.7 L1129.5 332.6 L1130.0 332.5 L1130.5 332.4 L1131.0 332.4 L1131.5 332.3 L1132.0 332.3 L1132.5 332.2 L1133.0 332.2 L1133.5 332.1 L1134.0 332.1 L1134.5 332.1 L1135.0 332.0 L1135.5 332.0 L1136.0 332.0 L1136.5 331.9 L1137.0 331.9 L1137.5 331.9 L1138.0 331.9 L1138.5 331.9 L1139.0 331.8 L1139.5 331.6 L1140.0 331.3 L1140.5 331.1 L1141.0 330.7 L1141.5 330.3 L1142.0 329.9 L1142.5 329.4 L1143.0 328.9 L1143.5 328.4 L1144.0 327.8 L1144.5 327.2 L1145.0 326.6 L1145.5 325.9 L1146.0 325.3 L1146.5 324.6 L1147.0 323.9 L1147.5 323.2 L1148.0 322.4 L1148.5 321.7 L1149.0 320.9 L1149.5 320.2 L1150.0 319.4 L1150.5 318.6 L1151.0 317.8" fill="none" stroke="#10d010" stroke-width="1.5"/><path d="M401.5 459.0 L472.8 331.7 L494.1 331.7 L598.5 141.5 L689.9 141.5 L794.8 331.7 L814.8 331.7 L919.4 521.4 L1011.8 521.4 L1115.7 331.7 L1137.7 331.7 L1151.0 308.2" fill="none" stroke="#e8e000" stroke-width="1.6" stroke-linejoin="round"/><path d="M402.0 467.1 L402.5 466.2 L403.0 465.3 L403.5 464.4 L404.0 463.6 L404.5 462.7 L405.0 461.8 L405.5 460.9 L406.0 460.0 L406.5 459.1 L407.0 458.2 L407.5 457.3 L408.0 456.4 L408.5 455.5 L409.0 454.6 L409.5 453.7 L410.0 452.8 L410.5 451.9 L411.0 451.1 L411.5 450.2 L412.0 449.3 L412.5 448.4 L413.0 447.5 L413.5 446.6 L414.0 445.7 L414.5 444.8 L415.0 443.9 L415.5 443.0 L416.0 442.1 L416.5 441.2 L417.0 440.3 L417.5 439.4 L418.0 438.6 L418.5 437.7 L419.0 436.8 L419.5 435.9 L420.0 435.0 L420.5 434.1 L421.0 433.2 L421.5 432.3 L422.0 431.4 L422.5 430.5 L423.0 429.6 L423.5 428.7 L424.0 427.8 L424.5 427.0 L425.0 426.1 L425.5 425.2 L426.0 424.3 L426.5 423.4 L427.0 422.5 L427.5 421.6 L428.0 420.7 L428.5 419.8 L429.0 418.9 L429.5 418.0 L430.0 417.1 L430.5 416.2 L431.0 415.3 L431.5 414.5 L432.0 413.6 L432.5 412.7 L433.0 411.8 L433.5 410.9 L434.0 410.0 L434.5 409.1 L435.0 408.2 L435.5 407.3 L436.0 406.4 L436.5 405.5 L437.0 404.6 L437.5 403.7 L438.0 402.8 L438.5 402.0 L439.0 401.1 L439.5 400.2 L440.0 399.3 L440.5 398.4 L441.0 397.5 L441.5 396.6 L442.0 395.7 L442.5 394.8 L443.0 393.9 L443.5 393.0 L444.0 392.1 L444.5 391.2 L445.0 390.4 L445.5 389.5 L446.0 388.6 L446.5 387.7 L447.0 386.8 L447.5 385.9 L448.0 385.0 L448.5 384.1 L449.0 383.2 L449.5 382.3 L450.0 381.4 L450.5 380.5 L451.0 379.6 L451.5 378.7 L452.0 377.9 L452.5 377.0 L453.0 376.1 L453.5 375.2 L454.0 374.3 L454.5 373.4 L455.0 372.5 L455.5 371.6 L456.0 370.7 L456.5 369.8 L457.0 368.9 L457.5 368.0 L458.0 367.1 L458.5 366.2 L459.0 365.4 L459.5 364.5 L460.0 363.6 L460.5 362.7 L461.0 361.8 L461.5 360.9 L462.0 360.0 L462.5 359.1 L463.0 358.2 L463.5 357.3 L464.0 356.4 L464.5 355.5 L465.0 354.6 L465.5 353.7 L466.0 352.9 L466.5 352.0 L467.0 351.1 L467.5 350.2 L468.0 349.3 L468.5 348.4 L469.0 347.5 L469.5 346.6 L470.0 345.7 L470.5 344.8 L471.0 343.9 L471.5 343.0 L472.0 342.1 L472.5 341.3 L473.0 340.4 L473.5 339.6 L474.0 338.9 L474.5 338.2 L475.0 337.6 L475.5 337.1 L476.0 336.6 L476.5 336.1 L477.0 335.7 L477.5 335.3 L478.0 335.0 L478.5 334.7 L479.0 334.4 L479.5 334.2 L480.0 333.9 L480.5 333.7 L481.0 333.5 L481.5 333.4 L482.0 333.2 L482.5 333.1 L483.0 333.0 L483.5 332.8 L484.0 332.7 L484.5 332.6 L485.0 332.6 L485.5 332.5 L486.0 332.4 L486.5 332.3 L487.0 332.3 L487.5 332.2 L488.0 332.2 L488.5 332.1 L489.0 332.1 L489.5 332.1 L490.0 332.0 L490.5 332.0 L491.0 332.0 L491.5 331.9 L492.0 331.9 L492.5 331.9 L493.0 331.9 L493.5 331.9 L494.0 331.8 L494.5 331.8 L495.0 331.7 L495.5 331.4 L496.0 331.2 L496.5 330.8 L497.0 330.4 L497.5 330.0 L498.0 329.5 L498.5 329.0 L499.0 328.5 L499.5 327.9 L500.0 327.3 L500.5 326.6 L501.0 325.9 L501.5 325.3 L502.0 324.5 L502.5 323.8 L503.0 323.1 L503.5 322.3 L504.0 321.5 L504.5 320.7 L505.0 319.9 L505.5 319.1 L506.0 318.3 L506.5 317.5 L507.0 316.7 L507.5 315.8 L508.0 315.0 L508.5 314.1 L509.0 313.2 L509.5 312.4 L510.0 311.5 L510.5 310.6 L511.0 309.8 L511.5 308.9 L512.0 308.0 L512.5 307.1 L513.0 306.2 L513.5 305.3 L514.0 304.5 L514.5 303.6 L515.0 302.7 L515.5 301.8 L516.0 300.9 L516.5 300.0 L517.0 299.1 L517.5 298.2 L518.0 297.3 L518.5 296.4 L519.0 295.5 L519.5 294.6 L520.0 293.7 L520.5 292.7 L521.0 291.8 L521.5 290.9 L522.0 290.0 L522.5 289.1 L523.0 288.2 L523.5 287.3 L524.0 286.4 L524.5 285.5 L525.0 284.6 L525.5 283.7 L526.0 282.8 L526.5 281.9 L527.0 280.9 L527.5 280.0 L528.0 279.1 L528.5 278.2 L529.0 277.3 L529.5 276.4 L530.0 275.5 L530.5 274.6 L531.0 273.7 L531.5 272.8 L532.0 271.8 L532.5 270.9 L533.0 270.0 L533.5 269.1 L534.0 268.2 L534.5 267.3 L535.0 266.4 L535.5 265.5 L536.0 264.6 L536.5 263.7 L537.0 262.7 L537.5 261.8 L538.0 260.9 L538.5 260.0 L539.0 259.1 L539.5 258.2 L540.0 257.3 L540.5 256.4 L541.0 255.5 L541.5 254.5 L542.0 253.6 L542.5 252.7 L543.0 251.8 L543.5 250.9 L544.0 250.0 L544.5 249.1 L545.0 248.2 L545.5 247.3 L546.0 246.3 L546.5 245.4 L547.0 244.5 L547.5 243.6 L548.0 242.7 L548.5 241.8 L549.0 240.9 L549.5 240.0 L550.0 239.1 L550.5 238.1 L551.0 237.2 L551.5 236.3 L552.0 235.4 L552.5 234.5 L553.0 233.6 L553.5 232.7 L554.0 231.8 L554.5 230.9 L555.0 230.0 L555.5 229.0 L556.0 228.1 L556.5 227.2 L557.0 226.3 L557.5 225.4 L558.0 224.5 L558.5 223.6 L559.0 222.7 L559.5 221.8 L560.0 220.8 L560.5 219.9 L561.0 219.0 L561.5 218.1 L562.0 217.2 L562.5 216.3 L563.0 215.4 L563.5 214.5 L564.0 213.6 L564.5 212.6 L565.0 211.7 L565.5 210.8 L566.0 209.9 L566.5 209.0 L567.0 208.1 L567.5 207.2 L568.0 206.3 L568.5 205.4 L569.0 204.4 L569.5 203.5 L570.0 202.6 L570.5 201.7 L571.0 200.8 L571.5 199.9 L572.0 199.0 L572.5 198.1 L573.0 197.2 L573.5 196.2 L574.0 195.3 L574.5 194.4 L575.0 193.5 L575.5 192.6 L576.0 191.7 L576.5 190.8 L577.0 189.9 L577.5 189.0 L578.0 188.0 L578.5 187.1 L579.0 186.2 L579.5 185.3 L580.0 184.4 L580.5 183.5 L581.0 182.6 L581.5 181.7 L582.0 180.8 L582.5 179.8 L583.0 178.9 L583.5 178.0 L584.0 177.1 L584.5 176.2 L585.0 175.3 L585.5 174.4 L586.0 173.5 L586.5 172.6 L587.0 171.7 L587.5 170.7 L588.0 169.8 L588.5 168.9 L589.0 168.0 L589.5 167.1 L590.0 166.2 L590.5 165.3 L591.0 164.4 L591.5 163.5 L592.0 162.5 L592.5 161.6 L593.0 160.7 L593.5 159.8 L594.0 158.9 L594.5 158.0 L595.0 157.1 L595.5 156.2 L596.0 155.3 L596.5 154.3 L597.0 153.4 L597.5 152.5 L598.0 151.6 L598.5 150.7 L599.0 149.9 L599.5 149.1 L600.0 148.4 L600.5 147.8 L601.0 147.2 L601.5 146.7 L602.0 146.2 L602.5 145.7 L603.0 145.4 L603.5 145.0 L604.0 144.7 L604.5 144.4 L605.0 144.1 L605.5 143.9 L606.0 143.7 L606.5 143.5 L607.0 143.3 L607.5 143.1 L608.0 143.0 L608.5 142.8 L609.0 142.7 L609.5 142.6 L610.0 142.5 L610.5 142.4 L611.0 142.3 L611.5 142.2 L612.0 142.2 L612.5 142.1 L613.0 142.1 L613.5 142.0 L614.0 142.0 L614.5 141.9 L615.0 141.9 L615.5 141.8 L616.0 141.8 L616.5 141.8 L617.0 141.8 L617.5 141.8 L618.0 141.8 L618.5 141.8 L619.0 141.8 L619.5 141.8 L620.0 141.8 L620.5 141.8 L621.0 141.8 L621.5 141.8 L622.0 141.8 L622.5 141.8 L623.0 141.8 L623.5 141.8 L624.0 141.8 L624.5 141.8 L625.0 141.8 L625.5 141.8 L626.0 141.8 L626.5 141.8 L627.0 141.8 L627.5 141.8 L628.0 141.8 L628.5 141.8 L629.0 141.8 L629.5 141.8 L630.0 141.8 L630.5 141.8 L631.0 141.8 L631.5 141.8 L632.0 141.8 L632.5 141.8 L633.0 141.8 L633.5 141.8 L634.0 141.8 L634.5 141.8 L635.0 141.8 L635.5 141.8 L636.0 141.8 L636.5 141.8 L637.0 141.8 L637.5 141.8 L638.0 141.8 L638.5 141.8 L639.0 141.8 L639.5 141.8 L640.0 141.8 L640.5 141.8 L641.0 141.8 L641.5 141.8 L642.0 141.8 L642.5 141.8 L643.0 141.8 L643.5 141.8 L644.0 141.8 L644.5 141.8 L645.0 141.8 L645.5 141.8 L646.0 141.8 L646.5 141.8 L647.0 141.8 L647.5 141.8 L648.0 141.8 L648.5 141.8 L649.0 141.8 L649.5 141.8 L650.0 141.8 L650.5 141.8 L651.0 141.8 L651.5 141.8 L652.0 141.8 L652.5 141.8 L653.0 141.8 L653.5 141.8 L654.0 141.8 L654.5 141.8 L655.0 141.8 L655.5 141.8 L656.0 141.8 L656.5 141.8 L657.0 141.8 L657.5 141.8 L658.0 141.8 L658.5 141.8 L659.0 141.8 L659.5 141.8 L660.0 141.8 L660.5 141.8 L661.0 141.8 L661.5 141.8 L662.0 141.8 L662.5 141.8 L663.0 141.8 L663.5 141.8 L664.0 141.8 L664.5 141.8 L665.0 141.8 L665.5 141.8 L666.0 141.8 L666.5 141.8 L667.0 141.8 L667.5 141.8 L668.0 141.8 L668.5 141.8 L669.0 141.8 L669.5 141.8 L670.0 141.8 L670.5 141.8 L671.0 141.8 L671.5 141.8 L672.0 141.8 L672.5 141.8 L673.0 141.8 L673.5 141.8 L674.0 141.8 L674.5 141.8 L675.0 141.8 L675.5 141.8 L676.0 141.8 L676.5 141.8 L677.0 141.8 L677.5 141.8 L678.0 141.8 L678.5 141.8 L679.0 141.8 L679.5 141.8 L680.0 141.8 L680.5 141.8 L681.0 141.8 L681.5 141.8 L682.0 141.8 L682.5 141.8 L683.0 141.8 L683.5 141.8 L684.0 141.8 L684.5 141.8 L685.0 141.8 L685.5 141.8 L686.0 141.8 L686.5 141.8 L687.0 141.8 L687.5 141.8 L688.0 141.8 L688.5 141.8 L689.0 141.8 L689.5 141.8 L690.0 141.8 L690.5 141.8 L691.0 141.8 L691.5 142.0 L692.0 142.3 L692.5 142.6 L693.0 143.0 L693.5 143.4 L694.0 143.9 L694.5 144.4 L695.0 145.0 L695.5 145.6 L696.0 146.2 L696.5 146.9 L697.0 147.5 L697.5 148.2 L698.0 148.9 L698.5 149.7 L699.0 150.4 L699.5 151.2 L700.0 152.0 L700.5 152.7 L701.0 153.5 L701.5 154.3 L702.0 155.2 L702.5 156.0 L703.0 156.8 L703.5 157.7 L704.0 158.5 L704.5 159.4 L705.0 160.2 L705.5 161.1 L706.0 161.9 L706.5 162.8 L707.0 163.7 L707.5 164.6 L708.0 165.4 L708.5 166.3 L709.0 167.2 L709.5 168.1 L710.0 169.0 L710.5 169.9 L711.0 170.8 L711.5 171.6 L712.0 172.5 L712.5 173.4 L713.0 174.3 L713.5 175.2 L714.0 176.1 L714.5 177.0 L715.0 177.9 L715.5 178.8 L716.0 179.7 L716.5 180.6 L717.0 181.5 L717.5 182.4 L718.0 183.3 L718.5 184.2 L719.0 185.1 L719.5 186.0 L720.0 186.9 L720.5 187.9 L721.0 188.8 L721.5 189.7 L722.0 190.6 L722.5 191.5 L723.0 192.4 L723.5 193.3 L724.0 194.2 L724.5 195.1 L725.0 196.0 L725.5 196.9 L726.0 197.8 L726.5 198.7 L727.0 199.6 L727.5 200.5 L728.0 201.4 L728.5 202.3 L729.0 203.2 L729.5 204.1 L730.0 205.1 L730.5 206.0 L731.0 206.9 L731.5 207.8 L732.0 208.7 L732.5 209.6 L733.0 210.5 L733.5 211.4 L734.0 212.3 L734.5 213.2 L735.0 214.1 L735.5 215.0 L736.0 215.9 L736.5 216.8 L737.0 217.7 L737.5 218.7 L738.0 219.6 L738.5 220.5 L739.0 221.4 L739.5 222.3 L740.0 223.2 L740.5 224.1 L741.0 225.0 L741.5 225.9 L742.0 226.8 L742.5 227.7 L743.0 228.6 L743.5 229.5 L744.0 230.4 L744.5 231.3 L745.0 232.2 L745.5 233.2 L746.0 234.1 L746.5 235.0 L747.0 235.9 L747.5 236.8 L748.0 237.7 L748.5 238.6 L749.0 239.5 L749.5 240.4 L750.0 241.3 L750.5 242.2 L751.0 243.1 L751.5 244.0 L752.0 244.9 L752.5 245.8 L753.0 246.8 L753.5 247.7 L754.0 248.6 L754.5 249.5 L755.0 250.4 L755.5 251.3 L756.0 252.2 L756.5 253.1 L757.0 254.0 L757.5 254.9 L758.0 255.8 L758.5 256.7 L759.0 257.6 L759.5 258.5 L760.0 259.4 L760.5 260.4 L761.0 261.3 L761.5 262.2 L762.0 263.1 L762.5 264.0 L763.0 264.9 L763.5 265.8 L764.0 266.7 L764.5 267.6 L765.0 268.5 L765.5 269.4 L766.0 270.3 L766.5 271.2 L767.0 272.1 L767.5 273.0 L768.0 274.0 L768.5 274.9 L769.0 275.8 L769.5 276.7 L770.0 277.6 L770.5 278.5 L771.0 279.4 L771.5 280.3 L772.0 281.2 L772.5 282.1 L773.0 283.0 L773.5 283.9 L774.0 284.8 L774.5 285.7 L775.0 286.6 L775.5 287.5 L776.0 288.5 L776.5 289.4 L777.0 290.3 L777.5 291.2 L778.0 292.1 L778.5 293.0 L779.0 293.9 L779.5 294.8 L780.0 295.7 L780.5 296.6 L781.0 297.5 L781.5 298.4 L782.0 299.3 L782.5 300.2 L783.0 301.1 L783.5 302.1 L784.0 303.0 L784.5 303.9 L785.0 304.8 L785.5 305.7 L786.0 306.6 L786.5 307.5 L787.0 308.4 L787.5 309.3 L788.0 310.2 L788.5 311.1 L789.0 312.0 L789.5 312.9 L790.0 313.8 L790.5 314.7 L791.0 315.7 L791.5 316.6 L792.0 317.5 L792.5 318.4 L793.0 319.3 L793.5 320.2 L794.0 321.1 L794.5 322.0 L795.0 322.9 L795.5 323.7 L796.0 324.4 L796.5 325.1 L797.0 325.7 L797.5 326.3 L798.0 326.8 L798.5 327.2 L799.0 327.6 L799.5 328.0 L800.0 328.3 L800.5 328.7 L801.0 328.9 L801.5 329.2 L802.0 329.4 L802.5 329.6 L803.0 329.8 L803.5 330.0 L804.0 330.2 L804.5 330.3 L805.0 330.4 L805.5 330.5 L806.0 330.6 L806.5 330.7 L807.0 330.8 L807.5 330.9 L808.0 331.0 L808.5 331.1 L809.0 331.1 L809.5 331.2 L810.0 331.2 L810.5 331.3 L811.0 331.3 L811.5 331.3 L812.0 331.4 L812.5 331.4 L813.0 331.4 L813.5 331.5 L814.0 331.5 L814.5 331.5 L815.0 331.5 L815.5 331.6 L816.0 331.8 L816.5 332.1 L817.0 332.4 L817.5 332.8 L818.0 333.2 L818.5 333.6 L819.0 334.1 L819.5 334.7 L820.0 335.3 L820.5 335.9 L821.0 336.5 L821.5 337.1 L822.0 337.8 L822.5 338.5 L823.0 339.3 L823.5 340.0 L824.0 340.7 L824.5 341.5 L825.0 342.3 L825.5 343.1 L826.0 343.9 L826.5 344.7 L827.0 345.5 L827.5 346.3 L828.0 347.2 L828.5 348.0 L829.0 348.9 L829.5 349.7 L830.0 350.6 L830.5 351.4 L831.0 352.3 L831.5 353.2 L832.0 354.1 L832.5 354.9 L833.0 355.8 L833.5 356.7 L834.0 357.6 L834.5 358.5 L835.0 359.4 L835.5 360.2 L836.0 361.1 L836.5 362.0 L837.0 362.9 L837.5 363.8 L838.0 364.7 L838.5 365.6 L839.0 366.5 L839.5 367.4 L840.0 368.3 L840.5 369.2 L841.0 370.1 L841.5 371.0 L842.0 371.9 L842.5 372.8 L843.0 373.7 L843.5 374.6 L844.0 375.5 L844.5 376.4 L845.0 377.3 L845.5 378.2 L846.0 379.1 L846.5 380.1 L847.0 381.0 L847.5 381.9 L848.0 382.8 L848.5 383.7 L849.0 384.6 L849.5 385.5 L850.0 386.4 L850.5 387.3 L851.0 388.2 L851.5 389.1 L852.0 390.0 L852.5 390.9 L853.0 391.8 L853.5 392.7 L854.0 393.6 L854.5 394.5 L855.0 395.5 L855.5 396.4 L856.0 397.3 L856.5 398.2 L857.0 399.1 L857.5 400.0 L858.0 400.9 L858.5 401.8 L859.0 402.7 L859.5 403.6 L860.0 404.5 L860.5 405.4 L861.0 406.3 L861.5 407.2 L862.0 408.1 L862.5 409.0 L863.0 410.0 L863.5 410.9 L864.0 411.8 L864.5 412.7 L865.0 413.6 L865.5 414.5 L866.0 415.4 L866.5 416.3 L867.0 417.2 L867.5 418.1 L868.0 419.0 L868.5 419.9 L869.0 420.8 L869.5 421.7 L870.0 422.7 L870.5 423.6 L871.0 424.5 L871.5 425.4 L872.0 426.3 L872.5 427.2 L873.0 428.1 L873.5 429.0 L874.0 429.9 L874.5 430.8 L875.0 431.7 L875.5 432.6 L876.0 433.5 L876.5 434.4 L877.0 435.3 L877.5 436.3 L878.0 437.2 L878.5 438.1 L879.0 439.0 L879.5 439.9 L880.0 440.8 L880.5 441.7 L881.0 442.6 L881.5 443.5 L882.0 444.4 L882.5 445.3 L883.0 446.2 L883.5 447.1 L884.0 448.0 L884.5 448.9 L885.0 449.9 L885.5 450.8 L886.0 451.7 L886.5 452.6 L887.0 453.5 L887.5 454.4 L888.0 455.3 L888.5 456.2 L889.0 457.1 L889.5 458.0 L890.0 458.9 L890.5 459.8 L891.0 460.7 L891.5 461.6 L892.0 462.5 L892.5 463.5 L893.0 464.4 L893.5 465.3 L894.0 466.2 L894.5 467.1 L895.0 468.0 L895.5 468.9 L896.0 469.8 L896.5 470.7 L897.0 471.6 L897.5 472.5 L898.0 473.4 L898.5 474.3 L899.0 475.2 L899.5 476.2 L900.0 477.1 L900.5 478.0 L901.0 478.9 L901.5 479.8 L902.0 480.7 L902.5 481.6 L903.0 482.5 L903.5 483.4 L904.0 484.3 L904.5 485.2 L905.0 486.1 L905.5 487.0 L906.0 487.9 L906.5 488.8 L907.0 489.8 L907.5 490.7 L908.0 491.6 L908.5 492.5 L909.0 493.4 L909.5 494.3 L910.0 495.2 L910.5 496.1 L911.0 497.0 L911.5 497.9 L912.0 498.8 L912.5 499.7 L913.0 500.6 L913.5 501.5 L914.0 502.4 L914.5 503.4 L915.0 504.3 L915.5 505.2 L916.0 506.1 L916.5 507.0 L917.0 507.9 L917.5 508.8 L918.0 509.7 L918.5 510.6 L919.0 511.5 L919.5 512.4 L920.0 513.2 L920.5 514.0 L921.0 514.7 L921.5 515.3 L922.0 515.9 L922.5 516.4 L923.0 516.8 L923.5 517.3 L924.0 517.6 L924.5 518.0 L925.0 518.3 L925.5 518.6 L926.0 518.8 L926.5 519.1 L927.0 519.3 L927.5 519.5 L928.0 519.7 L928.5 519.8 L929.0 520.0 L929.5 520.1 L930.0 520.2 L930.5 520.3 L931.0 520.4 L931.5 520.5 L932.0 520.6 L932.5 520.7 L933.0 520.7 L933.5 520.8 L934.0 520.9 L934.5 520.9 L935.0 521.0 L935.5 521.0 L936.0 521.0 L936.5 521.1 L937.0 521.1 L937.5 521.1 L938.0 521.1 L938.5 521.2 L939.0 521.2 L939.5 521.2 L940.0 521.2 L940.5 521.2 L941.0 521.3 L941.5 521.3 L942.0 521.3 L942.5 521.3 L943.0 521.3 L943.5 521.3 L944.0 521.3 L944.5 521.3 L945.0 521.3 L945.5 521.3 L946.0 521.3 L946.5 521.4 L947.0 521.4 L947.5 521.4 L948.0 521.4 L948.5 521.4 L949.0 521.4 L949.5 521.4 L950.0 521.4 L950.5 521.4 L951.0 521.4 L951.5 521.4 L952.0 521.4 L952.5 521.4 L953.0 521.4 L953.5 521.4 L954.0 521.4 L954.5 521.4 L955.0 521.4 L955.5 521.4 L956.0 521.4 L956.5 521.4 L957.0 521.4 L957.5 521.4 L958.0 521.4 L958.5 521.4 L959.0 521.4 L959.5 521.4 L960.0 521.4 L960.5 521.4 L961.0 521.4 L961.5 521.4 L962.0 521.4 L962.5 521.4 L963.0 521.4 L963.5 521.4 L964.0 521.4 L964.5 521.4 L965.0 521.4 L965.5 521.4 L966.0 521.4 L966.5 521.4 L967.0 521.4 L967.5 521.4 L968.0 521.4 L968.5 521.4 L969.0 521.4 L969.5 521.4 L970.0 521.4 L970.5 521.4 L971.0 521.4 L971.5 521.4 L972.0 521.4 L972.5 521.4 L973.0 521.4 L973.5 521.4 L974.0 521.4 L974.5 521.4 L975.0 521.4 L975.5 521.4 L976.0 521.4 L976.5 521.4 L977.0 521.4 L977.5 521.4 L978.0 521.4 L978.5 521.4 L979.0 521.4 L979.5 521.4 L980.0 521.4 L980.5 521.4 L981.0 521.4 L981.5 521.4 L982.0 521.4 L982.5 521.4 L983.0 521.4 L983.5 521.4 L984.0 521.4 L984.5 521.4 L985.0 521.4 L985.5 521.4 L986.0 521.4 L986.5 521.4 L987.0 521.4 L987.5 521.4 L988.0 521.4 L988.5 521.4 L989.0 521.4 L989.5 521.4 L990.0 521.4 L990.5 521.4 L991.0 521.4 L991.5 521.4 L992.0 521.4 L992.5 521.4 L993.0 521.4 L993.5 521.4 L994.0 521.4 L994.5 521.4 L995.0 521.4 L995.5 521.4 L996.0 521.4 L996.5 521.4 L997.0 521.4 L997.5 521.4 L998.0 521.4 L998.5 521.4 L999.0 521.4 L999.5 521.4 L1000.0 521.4 L1000.5 521.4 L1001.0 521.4 L1001.5 521.4 L1002.0 521.4 L1002.5 521.4 L1003.0 521.4 L1003.5 521.4 L1004.0 521.4 L1004.5 521.4 L1005.0 521.4 L1005.5 521.4 L1006.0 521.4 L1006.5 521.4 L1007.0 521.4 L1007.5 521.4 L1008.0 521.4 L1008.5 521.4 L1009.0 521.4 L1009.5 521.4 L1010.0 521.4 L1010.5 521.4 L1011.0 521.4 L1011.5 521.4 L1012.0 521.4 L1012.5 521.3 L1013.0 521.1 L1013.5 520.9 L1014.0 520.6 L1014.5 520.2 L1015.0 519.8 L1015.5 519.4 L1016.0 518.9 L1016.5 518.3 L1017.0 517.8 L1017.5 517.1 L1018.0 516.5 L1018.5 515.9 L1019.0 515.2 L1019.5 514.5 L1020.0 513.8 L1020.5 513.0 L1021.0 512.3 L1021.5 511.5 L1022.0 510.7 L1022.5 509.9 L1023.0 509.1 L1023.5 508.3 L1024.0 507.5 L1024.5 506.6 L1025.0 505.8 L1025.5 505.0 L1026.0 504.1 L1026.5 503.2 L1027.0 502.4 L1027.5 501.5 L1028.0 500.6 L1028.5 499.8 L1029.0 498.9 L1029.5 498.0 L1030.0 497.1 L1030.5 496.2 L1031.0 495.3 L1031.5 494.4 L1032.0 493.6 L1032.5 492.7 L1033.0 491.8 L1033.5 490.9 L1034.0 490.0 L1034.5 489.1 L1035.0 488.2 L1035.5 487.3 L1036.0 486.4 L1036.5 485.4 L1037.0 484.5 L1037.5 483.6 L1038.0 482.7 L1038.5 481.8 L1039.0 480.9 L1039.5 480.0 L1040.0 479.1 L1040.5 478.2 L1041.0 477.3 L1041.5 476.4 L1042.0 475.5 L1042.5 474.5 L1043.0 473.6 L1043.5 472.7 L1044.0 471.8 L1044.5 470.9 L1045.0 470.0 L1045.5 469.1 L1046.0 468.2 L1046.5 467.3 L1047.0 466.3 L1047.5 465.4 L1048.0 464.5 L1048.5 463.6 L1049.0 462.7 L1049.5 461.8 L1050.0 460.9 L1050.5 460.0 L1051.0 459.0 L1051.5 458.1 L1052.0 457.2 L1052.5 456.3 L1053.0 455.4 L1053.5 454.5 L1054.0 453.6 L1054.5 452.7 L1055.0 451.7 L1055.5 450.8 L1056.0 449.9 L1056.5 449.0 L1057.0 448.1 L1057.5 447.2 L1058.0 446.3 L1058.5 445.4 L1059.0 444.4 L1059.5 443.5 L1060.0 442.6 L1060.5 441.7 L1061.0 440.8 L1061.5 439.9 L1062.0 439.0 L1062.5 438.1 L1063.0 437.1 L1063.5 436.2 L1064.0 435.3 L1064.5 434.4 L1065.0 433.5 L1065.5 432.6 L1066.0 431.7 L1066.5 430.7 L1067.0 429.8 L1067.5 428.9 L1068.0 428.0 L1068.5 427.1 L1069.0 426.2 L1069.5 425.3 L1070.0 424.4 L1070.5 423.4 L1071.0 422.5 L1071.5 421.6 L1072.0 420.7 L1072.5 419.8 L1073.0 418.9 L1073.5 418.0 L1074.0 417.1 L1074.5 416.1 L1075.0 415.2 L1075.5 414.3 L1076.0 413.4 L1076.5 412.5 L1077.0 411.6 L1077.5 410.7 L1078.0 409.8 L1078.5 408.8 L1079.0 407.9 L1079.5 407.0 L1080.0 406.1 L1080.5 405.2 L1081.0 404.3 L1081.5 403.4 L1082.0 402.4 L1082.5 401.5 L1083.0 400.6 L1083.5 399.7 L1084.0 398.8 L1084.5 397.9 L1085.0 397.0 L1085.5 396.1 L1086.0 395.1 L1086.5 394.2 L1087.0 393.3 L1087.5 392.4 L1088.0 391.5 L1088.5 390.6 L1089.0 389.7 L1089.5 388.8 L1090.0 387.8 L1090.5 386.9 L1091.0 386.0 L1091.5 385.1 L1092.0 384.2 L1092.5 383.3 L1093.0 382.4 L1093.5 381.5 L1094.0 380.5 L1094.5 379.6 L1095.0 378.7 L1095.5 377.8 L1096.0 376.9 L1096.5 376.0 L1097.0 375.1 L1097.5 374.1 L1098.0 373.2 L1098.5 372.3 L1099.0 371.4 L1099.5 370.5 L1100.0 369.6 L1100.5 368.7 L1101.0 367.8 L1101.5 366.8 L1102.0 365.9 L1102.5 365.0 L1103.0 364.1 L1103.5 363.2 L1104.0 362.3 L1104.5 361.4 L1105.0 360.5 L1105.5 359.5 L1106.0 358.6 L1106.5 357.7 L1107.0 356.8 L1107.5 355.9 L1108.0 355.0 L1108.5 354.1 L1109.0 353.2 L1109.5 352.2 L1110.0 351.3 L1110.5 350.4 L1111.0 349.5 L1111.5 348.6 L1112.0 347.7 L1112.5 346.8 L1113.0 345.8 L1113.5 344.9 L1114.0 344.0 L1114.5 343.1 L1115.0 342.2 L1115.5 341.3 L1116.0 340.4 L1116.5 339.6 L1117.0 338.9 L1117.5 338.2 L1118.0 337.6 L1118.5 337.1 L1119.0 336.6 L1119.5 336.1 L1120.0 335.7 L1120.5 335.3 L1121.0 335.0 L1121.5 334.7 L1122.0 334.4 L1122.5 334.2 L1123.0 333.9 L1123.5 333.7 L1124.0 333.6 L1124.5 333.4 L1125.0 333.2 L1125.5 333.1 L1126.0 333.0 L1126.5 332.8 L1127.0 332.7 L1127.5 332.6 L1128.0 332.6 L1128.5 332.5 L1129.0 332.4 L1129.5 332.3 L1130.0 332.3 L1130.5 332.2 L1131.0 332.2 L1131.5 332.1 L1132.0 332.1 L1132.5 332.1 L1133.0 332.0 L1133.5 332.0 L1134.0 332.0 L1134.5 331.9 L1135.0 331.9 L1135.5 331.9 L1136.0 331.9 L1136.5 331.9 L1137.0 331.9 L1137.5 331.8 L1138.0 331.8 L1138.5 331.7 L1139.0 331.5 L1139.5 331.2 L1140.0 330.9 L1140.5 330.6 L1141.0 330.1 L1141.5 329.7 L1142.0 329.2 L1142.5 328.7 L1143.0 328.1 L1143.5 327.5 L1144.0 326.9 L1144.5 326.2 L1145.0 325.6 L1145.5 324.9 L1146.0 324.2 L1146.5 323.5 L1147.0 322.7 L1147.5 322.0 L1148.0 321.2 L1148.5 320.4 L1149.0 319.7 L1149.5 318.9 L1150.0 318.1 L1150.5 317.3 L1151.0 316.5" fill="none" stroke="#8ad6ea" stroke-width="1.35"/></g><path d="M395 327.5 L401.5 331.5 L395 335.5z" fill="#10e010"/><path d="M395 422.5 L401.5 426.5 L395 430.5z" fill="#f020f0"/><path d="M395 469.5 L401.5 473.5 L395 477.5z" fill="#10d8f0"/><path d="M395 517.5 L401.5 521.5 L395 525.5z" fill="#e070b0"/><path d="M395 564.8 L401.5 568.8 L395 572.8z" fill="#3aa060"/></svg>
<svg width="1192" height="725" font-family="Liberation Sans, sans-serif"><rect x="402" y="616" width="749" height="1" fill="#c4c4c4"/><rect x="401.0" y="613" width="1.3" height="7" fill="#e8e8e8"/><rect x="476.0" y="613" width="1" height="6" fill="#c8c8c8"/><rect x="551.0" y="613" width="1.3" height="7" fill="#e8e8e8"/><rect x="626.0" y="613" width="1" height="6" fill="#c8c8c8"/><rect x="701.0" y="613" width="1.3" height="7" fill="#e8e8e8"/><rect x="776.0" y="613" width="1" height="6" fill="#c8c8c8"/><rect x="851.0" y="613" width="1.3" height="7" fill="#e8e8e8"/><rect x="926.0" y="613" width="1" height="6" fill="#c8c8c8"/><rect x="1001.0" y="613" width="1.3" height="7" fill="#e8e8e8"/><rect x="1076.0" y="613" width="1" height="6" fill="#c8c8c8"/><rect x="1150.0" y="613" width="1.3" height="7" fill="#e8e8e8"/><text x="393" y="629.8" font-size="8.5px" fill="#e4e4e4" text-anchor="start" textLength="19" lengthAdjust="spacingAndGlyphs">0.000</text><text x="551.5" y="629.8" font-size="8.5px" fill="#e4e4e4" text-anchor="middle" textLength="29" lengthAdjust="spacingAndGlyphs">716.800</text><text x="701.5" y="629.8" font-size="8.5px" fill="#e4e4e4" text-anchor="middle" textLength="33" lengthAdjust="spacingAndGlyphs">1433.600</text><text x="851.5" y="629.8" font-size="8.5px" fill="#e4e4e4" text-anchor="middle" textLength="33" lengthAdjust="spacingAndGlyphs">2150.400</text><text x="1001.5" y="629.8" font-size="8.5px" fill="#e4e4e4" text-anchor="middle" textLength="33" lengthAdjust="spacingAndGlyphs">2867.200</text><text x="1180.5" y="629.8" font-size="8.5px" fill="#e4e4e4" text-anchor="end" textLength="46" lengthAdjust="spacingAndGlyphs">3584.000ms</text><rect x="402" y="632" width="749" height="12" fill="#cdcdcd"/><rect x="402" y="632" width="12" height="12" fill="#f0f0f0"/><rect x="1139" y="632" width="12" height="12" fill="#f0f0f0"/><path d="M409.5 635.5 l-3 2.5 3 2.5" fill="none" stroke="#808080" stroke-width="1"/><path d="M1143.5 635.5 l3 2.5 -3 2.5" fill="none" stroke="#808080" stroke-width="1"/></svg>
<div class="t" style="left:213px;top:664.7px;font-size:8.5px;color:#5ab8cc;transform:translateX(-50%)">CH4</div>
<div class="a" style="left:184px;top:674px;width:57.5px;height:13px;background:#7f7f7f"></div>
<div class="t" style="left:213px;top:677.5px;font-size:8.5px;color:#f4f4f4;transform:translateX(-50%)">AUTO</div>
<div class="a" style="left:184px;top:687px;width:57.5px;height:16px;background:linear-gradient(#f2f2f2,#e2e2e2);border-bottom:1px solid #bbb;box-sizing:border-box"></div>
<div class="t" style="left:226.5px;top:691.5px;font-size:9px;color:#111;transform:translateX(-100%)">50</div>
<svg width="1192" height="725"><path d="M234 692.5 l2 2 2-2" fill="none" stroke="#555" stroke-width="0.9"/></svg>
<div class="t" style="left:284.5px;top:664.7px;font-size:8.5px;color:#e8e800;transform:translateX(-50%)">CH3</div>
<div class="a" style="left:255.5px;top:674px;width:57.5px;height:13px;background:#7f7f7f"></div>
<div class="t" style="left:284.5px;top:677.5px;font-size:8.5px;color:#f4f4f4;transform:translateX(-50%)">AUTO</div>
<div class="a" style="left:255.5px;top:687px;width:57.5px;height:16px;background:linear-gradient(#f2f2f2,#e2e2e2);border-bottom:1px solid #bbb;box-sizing:border-box"></div>
<div class="t" style="left:298.0px;top:691.5px;font-size:9px;color:#111;transform:translateX(-100%)">50</div>
<svg width="1192" height="725"><path d="M305.5 692.5 l2 2 2-2" fill="none" stroke="#555" stroke-width="0.9"/></svg>
<div class="t" style="left:356px;top:664.7px;font-size:8.5px;color:#e020e0;transform:translateX(-50%)">CH2</div>
<div class="a" style="left:327px;top:674px;width:57.5px;height:13px;background:#7f7f7f"></div>
<div class="t" style="left:356px;top:677.5px;font-size:8.5px;color:#f4f4f4;transform:translateX(-50%)">AUTO</div>
<div class="a" style="left:327px;top:687px;width:57.5px;height:16px;background:linear-gradient(#f2f2f2,#e2e2e2);border-bottom:1px solid #bbb;box-sizing:border-box"></div>
<div class="t" style="left:369.5px;top:691.5px;font-size:9px;color:#111;transform:translateX(-100%)">1</div>
<svg width="1192" height="725"><path d="M377 692.5 l2 2 2-2" fill="none" stroke="#555" stroke-width="0.9"/></svg>
<div class="t" style="left:427.5px;top:664.7px;font-size:8.5px;color:#20d820;transform:translateX(-50%)">CH1</div>
<div class="a" style="left:398.5px;top:674px;width:57.5px;height:13px;background:#7f7f7f"></div>
<div class="t" style="left:427.5px;top:677.5px;font-size:8.5px;color:#f4f4f4;transform:translateX(-50%)">AUTO</div>
<div class="a" style="left:398.5px;top:687px;width:57.5px;height:16px;background:linear-gradient(#f2f2f2,#e2e2e2);border-bottom:1px solid #bbb;box-sizing:border-box"></div>
<div class="t" style="left:441.0px;top:691.5px;font-size:9px;color:#111;transform:translateX(-100%)">50</div>
<svg width="1192" height="725"><path d="M448.5 692.5 l2 2 2-2" fill="none" stroke="#555" stroke-width="0.9"/></svg>
<div class="t" style="left:460px;top:695px;font-size:9px;color:#e8e8e8;transform:scaleX(1.000);transform-origin:0 0">div</div>
<div class="a" style="left:1084px;top:655px;width:50.5px;height:15.5px;background:linear-gradient(#f2f2f2,#e2e2e2)"></div>
<div class="t" style="left:1100px;top:659px;font-size:9px;color:#333;transform:scaleX(0.886);transform-origin:0 0">FULL</div>
<svg width="1192" height="725"><path d="M1124.5 660.5 l2 2 2-2" fill="none" stroke="#555" stroke-width="0.9"/></svg>
<div class="t" style="left:1139px;top:661px;font-size:9px;color:#e8e8e8;transform:scaleX(0.981);transform-origin:0 0">ms/div</div>
<svg width="1192" height="725"><rect x="491.5" y="676.5" width="13" height="10" fill="#000" stroke="#6a6a6a" stroke-width="1"/><rect x="491.5" y="688.5" width="13" height="10" fill="#000" stroke="#6a6a6a" stroke-width="1"/><path d="M494.5 684 l3.5 -4 3.5 4z" fill="#8a8a8a"/><path d="M494.5 691 l3.5 4 3.5 -4z" fill="#8a8a8a"/><rect x="510.5" y="675.5" width="11" height="11" fill="#ee1111" stroke="#6a6a6a" stroke-width="1"/><path d="M516.00 677.60 L517.15 679.01 L518.94 679.30 L518.30 681.00 L518.94 682.70 L517.15 682.99 L516.00 684.40 L514.85 682.99 L513.06 682.70 L513.70 681.00 L513.06 679.30 L514.85 679.01Z" fill="#6a6a6a" stroke="#6a6a6a" stroke-width="0.6" stroke-linejoin="round"/><circle cx="516" cy="681" r="1.03" fill="#ee1111"/><rect x="661.5" y="676.5" width="13" height="10" fill="#000" stroke="#6a6a6a" stroke-width="1"/><rect x="661.5" y="688.5" width="13" height="10" fill="#000" stroke="#6a6a6a" stroke-width="1"/><path d="M664.5 684 l3.5 -4 3.5 4z" fill="#8a8a8a"/><path d="M664.5 691 l3.5 4 3.5 -4z" fill="#8a8a8a"/><rect x="680.5" y="675.5" width="11" height="11" fill="#10e0f0" stroke="#6a6a6a" stroke-width="1"/><path d="M686.00 677.60 L687.15 679.01 L688.94 679.30 L688.30 681.00 L688.94 682.70 L687.15 682.99 L686.00 684.40 L684.85 682.99 L683.06 682.70 L683.70 681.00 L683.06 679.30 L684.85 679.01Z" fill="#6a6a6a" stroke="#6a6a6a" stroke-width="0.6" stroke-linejoin="round"/><circle cx="686" cy="681" r="1.03" fill="#10e0f0"/><rect x="830.5" y="676.5" width="13" height="10" fill="#000" stroke="#6a6a6a" stroke-width="1"/><rect x="830.5" y="688.5" width="13" height="10" fill="#000" stroke="#6a6a6a" stroke-width="1"/><path d="M833.5 684 l3.5 -4 3.5 4z" fill="#8a8a8a"/><path d="M833.5 691 l3.5 4 3.5 -4z" fill="#8a8a8a"/><rect x="850.0" y="675.5" width="11" height="11" fill="#f060c0" stroke="#6a6a6a" stroke-width="1"/><path d="M855.50 677.60 L856.65 679.01 L858.44 679.30 L857.80 681.00 L858.44 682.70 L856.65 682.99 L855.50 684.40 L854.35 682.99 L852.56 682.70 L853.20 681.00 L852.56 679.30 L854.35 679.01Z" fill="#6a6a6a" stroke="#6a6a6a" stroke-width="0.6" stroke-linejoin="round"/><circle cx="855.5" cy="681" r="1.03" fill="#f060c0"/><rect x="1000.0" y="676.5" width="13" height="10" fill="#000" stroke="#6a6a6a" stroke-width="1"/><rect x="1000.0" y="688.5" width="13" height="10" fill="#000" stroke="#6a6a6a" stroke-width="1"/><path d="M1003.0 684 l3.5 -4 3.5 4z" fill="#8a8a8a"/><path d="M1003.0 691 l3.5 4 3.5 -4z" fill="#8a8a8a"/><rect x="1019.0" y="675.5" width="11" height="11" fill="#3a9a5a" stroke="#6a6a6a" stroke-width="1"/><path d="M1024.50 677.60 L1025.65 679.01 L1027.44 679.30 L1026.80 681.00 L1027.44 682.70 L1025.65 682.99 L1024.50 684.40 L1023.35 682.99 L1021.56 682.70 L1022.20 681.00 L1021.56 679.30 L1023.35 679.01Z" fill="#6a6a6a" stroke="#6a6a6a" stroke-width="0.6" stroke-linejoin="round"/><circle cx="1024.5" cy="681" r="1.03" fill="#3a9a5a"/></svg>
<div class="t" style="left:511px;top:689.5px;font-size:9px;color:#ee1111;transform:scaleX(0.947);transform-origin:0 0">I/O1:&#160;/S-ON</div>
<div class="t" style="left:680px;top:689.5px;font-size:9px;color:#10e0f0;transform:scaleX(0.962);transform-origin:0 0">I/O2:&#160;/P-CON</div>
<div class="t" style="left:849.5px;top:689.5px;font-size:9px;color:#f060c0;transform:scaleX(0.947);transform-origin:0 0">I/O3:&#160;/COIN</div>
<div class="t" style="left:1019px;top:689.5px;font-size:9px;color:#3a9a5a;transform:scaleX(0.919);transform-origin:0 0">I/O4:&#160;P-OT</div>
</body></html>
